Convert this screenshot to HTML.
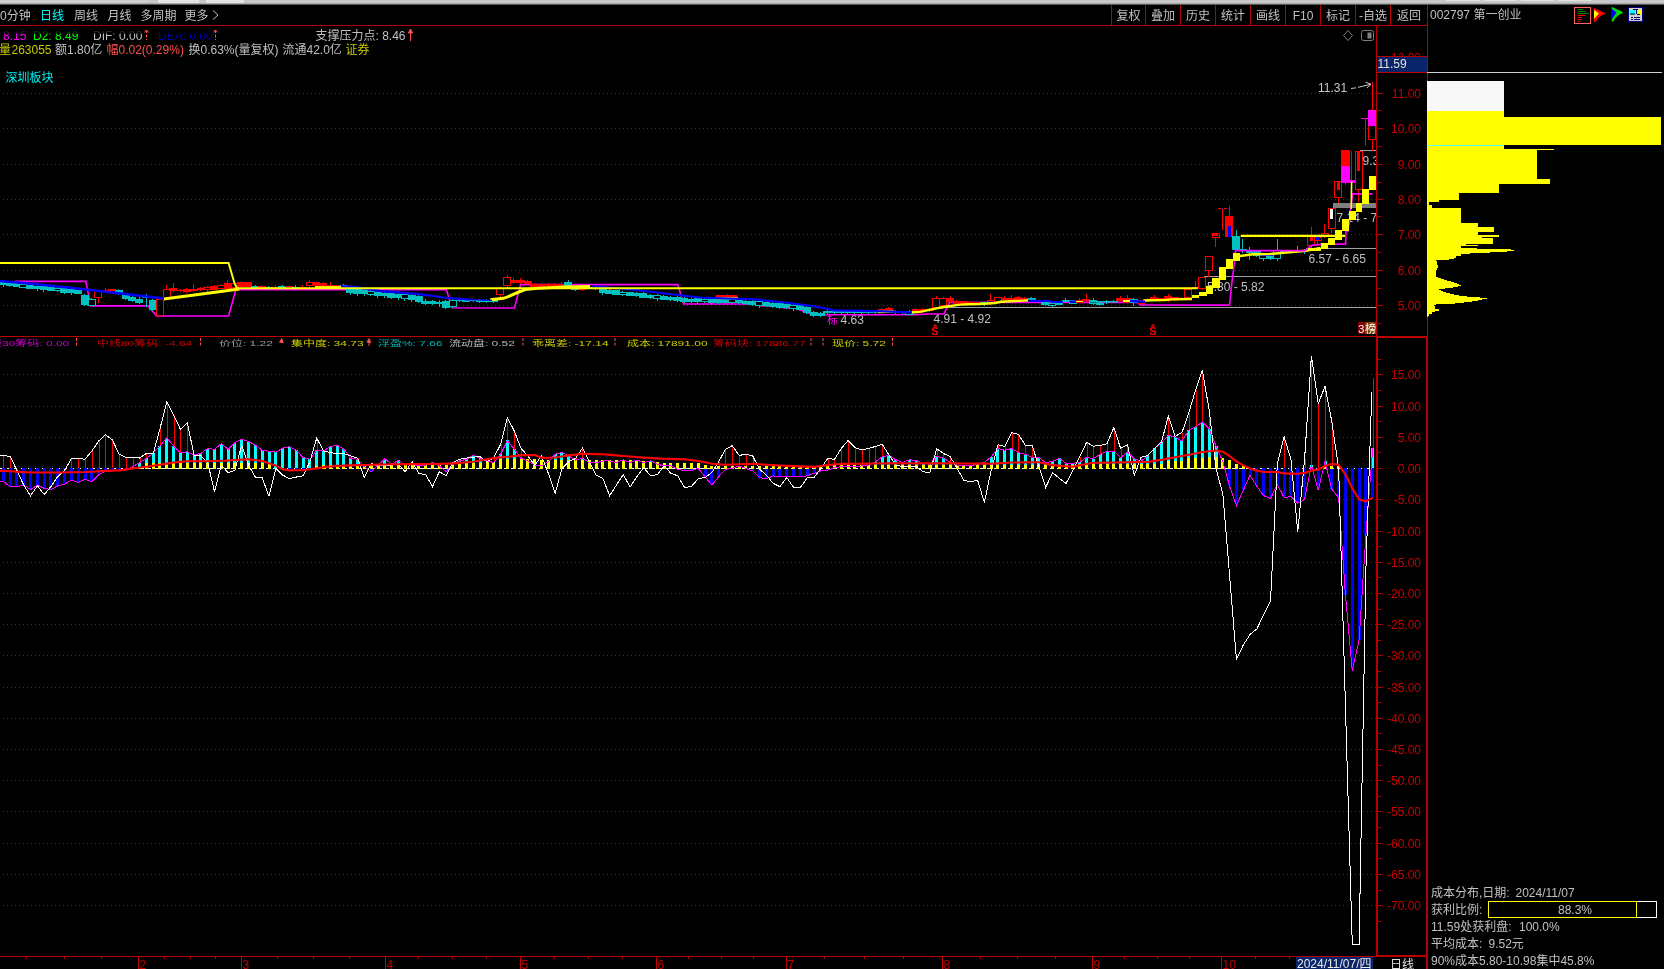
<!DOCTYPE html>
<html lang="zh"><head><meta charset="utf-8"><title>002797 第一创业</title>
<style>
html,body{margin:0;padding:0;background:#000;width:1664px;height:969px;overflow:hidden}
svg{display:block;position:absolute;left:0;top:0;will-change:transform}
text{font-family:"Liberation Sans","Noto Sans CJK SC",sans-serif;white-space:pre}
</style></head><body>
<svg width="1664" height="969" viewBox="0 0 1664 969">
<g shape-rendering="crispEdges">
<rect x="0" y="0" width="1664" height="969" fill="#000" />
<rect x="0" y="0" width="1664" height="4" fill="#c8c8c8" />
<rect x="0" y="3" width="1664" height="1" fill="#a8a8a8" />
<rect x="0" y="4" width="1664" height="1" fill="#585858" />
<rect x="158" y="0" width="41" height="3" fill="#e2e2e2" />
<rect x="206" y="0" width="38" height="3" fill="#e2e2e2" />
<rect x="1446" y="0" width="34" height="1" fill="#e2e2e2" />
<rect x="1484" y="0" width="33" height="1" fill="#e2e2e2" />
<rect x="1521" y="0" width="33" height="1" fill="#e2e2e2" />
<rect x="1558" y="0" width="33" height="1" fill="#e2e2e2" />
<rect x="0" y="0" width="147" height="3" fill="#d0d0d0" />
<rect x="0" y="25" width="1427" height="1" fill="#b80000" />
<rect x="1111" y="5" width="1" height="20" fill="#b80000" />
<rect x="1145" y="5" width="1" height="20" fill="#b80000" />
<rect x="1180" y="5" width="1" height="20" fill="#b80000" />
<rect x="1215" y="5" width="1" height="20" fill="#b80000" />
<rect x="1250" y="5" width="1" height="20" fill="#b80000" />
<rect x="1285" y="5" width="1" height="20" fill="#b80000" />
<rect x="1320" y="5" width="1" height="20" fill="#b80000" />
<rect x="1355" y="5" width="1" height="20" fill="#b80000" />
<rect x="1390" y="5" width="1" height="20" fill="#b80000" />
<rect x="1376" y="26" width="1" height="311" fill="#b80000" />
<rect x="1376" y="337" width="2" height="620" fill="#b80000" />
<rect x="1427" y="5" width="1" height="332" fill="#b80000" />
<rect x="1426" y="337" width="2" height="632" fill="#b80000" />
<rect x="0" y="336" width="1427" height="1" fill="#b80000" />
<rect x="1376" y="337" width="51" height="1" fill="#b80000" />
<rect x="1376" y="955" width="51" height="1" fill="#b80000" />
<rect x="0" y="956" width="1427" height="1" fill="#b80000" />
</g>
<g stroke="#b00000" stroke-width="1" stroke-dasharray="1 3" shape-rendering="crispEdges">
<line x1="3" y1="305.5" x2="1376" y2="305.5"/>
<line x1="3" y1="270.5" x2="1376" y2="270.5"/>
<line x1="3" y1="234.5" x2="1376" y2="234.5"/>
<line x1="3" y1="199.5" x2="1376" y2="199.5"/>
<line x1="3" y1="164.5" x2="1376" y2="164.5"/>
<line x1="3" y1="128.5" x2="1376" y2="128.5"/>
<line x1="3" y1="93.5" x2="1376" y2="93.5"/>
<line x1="3" y1="374.5" x2="1376" y2="374.5"/>
<line x1="3" y1="406.5" x2="1376" y2="406.5"/>
<line x1="3" y1="437.5" x2="1376" y2="437.5"/>
<line x1="3" y1="499.5" x2="1376" y2="499.5"/>
<line x1="3" y1="531.5" x2="1376" y2="531.5"/>
<line x1="3" y1="562.5" x2="1376" y2="562.5"/>
<line x1="3" y1="593.5" x2="1376" y2="593.5"/>
<line x1="3" y1="624.5" x2="1376" y2="624.5"/>
<line x1="3" y1="655.5" x2="1376" y2="655.5"/>
<line x1="3" y1="687.5" x2="1376" y2="687.5"/>
<line x1="3" y1="718.5" x2="1376" y2="718.5"/>
<line x1="3" y1="749.5" x2="1376" y2="749.5"/>
<line x1="3" y1="780.5" x2="1376" y2="780.5"/>
<line x1="3" y1="811.5" x2="1376" y2="811.5"/>
<line x1="3" y1="843.5" x2="1376" y2="843.5"/>
<line x1="3" y1="874.5" x2="1376" y2="874.5"/>
<line x1="3" y1="905.5" x2="1376" y2="905.5"/>
</g>
<g shape-rendering="crispEdges" fill="#b80000">
<rect x="1378" y="305" width="5" height="1" fill="#b80000" />
<rect x="1378" y="288" width="3" height="1" fill="#b80000" />
<rect x="1378" y="270" width="5" height="1" fill="#b80000" />
<rect x="1378" y="252" width="3" height="1" fill="#b80000" />
<rect x="1378" y="234" width="5" height="1" fill="#b80000" />
<rect x="1378" y="216" width="3" height="1" fill="#b80000" />
<rect x="1378" y="199" width="5" height="1" fill="#b80000" />
<rect x="1378" y="182" width="3" height="1" fill="#b80000" />
<rect x="1378" y="164" width="5" height="1" fill="#b80000" />
<rect x="1378" y="146" width="3" height="1" fill="#b80000" />
<rect x="1378" y="128" width="5" height="1" fill="#b80000" />
<rect x="1378" y="110" width="3" height="1" fill="#b80000" />
<rect x="1378" y="93" width="5" height="1" fill="#b80000" />
<rect x="1378" y="323" width="3" height="1" fill="#b80000" />
<rect x="1378" y="374" width="5" height="1" fill="#b80000" />
<rect x="1378" y="390" width="3" height="1" fill="#b80000" />
<rect x="1378" y="406" width="5" height="1" fill="#b80000" />
<rect x="1378" y="421" width="3" height="1" fill="#b80000" />
<rect x="1378" y="437" width="5" height="1" fill="#b80000" />
<rect x="1378" y="452" width="3" height="1" fill="#b80000" />
<rect x="1378" y="468" width="5" height="1" fill="#b80000" />
<rect x="1378" y="484" width="3" height="1" fill="#b80000" />
<rect x="1378" y="499" width="5" height="1" fill="#b80000" />
<rect x="1378" y="515" width="3" height="1" fill="#b80000" />
<rect x="1378" y="531" width="5" height="1" fill="#b80000" />
<rect x="1378" y="546" width="3" height="1" fill="#b80000" />
<rect x="1378" y="562" width="5" height="1" fill="#b80000" />
<rect x="1378" y="577" width="3" height="1" fill="#b80000" />
<rect x="1378" y="593" width="5" height="1" fill="#b80000" />
<rect x="1378" y="609" width="3" height="1" fill="#b80000" />
<rect x="1378" y="624" width="5" height="1" fill="#b80000" />
<rect x="1378" y="640" width="3" height="1" fill="#b80000" />
<rect x="1378" y="655" width="5" height="1" fill="#b80000" />
<rect x="1378" y="671" width="3" height="1" fill="#b80000" />
<rect x="1378" y="687" width="5" height="1" fill="#b80000" />
<rect x="1378" y="702" width="3" height="1" fill="#b80000" />
<rect x="1378" y="718" width="5" height="1" fill="#b80000" />
<rect x="1378" y="733" width="3" height="1" fill="#b80000" />
<rect x="1378" y="749" width="5" height="1" fill="#b80000" />
<rect x="1378" y="765" width="3" height="1" fill="#b80000" />
<rect x="1378" y="780" width="5" height="1" fill="#b80000" />
<rect x="1378" y="796" width="3" height="1" fill="#b80000" />
<rect x="1378" y="811" width="5" height="1" fill="#b80000" />
<rect x="1378" y="827" width="3" height="1" fill="#b80000" />
<rect x="1378" y="843" width="5" height="1" fill="#b80000" />
<rect x="1378" y="858" width="3" height="1" fill="#b80000" />
<rect x="1378" y="874" width="5" height="1" fill="#b80000" />
<rect x="1378" y="890" width="3" height="1" fill="#b80000" />
<rect x="1378" y="905" width="5" height="1" fill="#b80000" />
<rect x="1378" y="921" width="3" height="1" fill="#b80000" />
<rect x="1378" y="359" width="3" height="1" fill="#b80000" />
</g>
<g font-family='"Liberation Sans","Noto Sans CJK SC",sans-serif' font-size="12" fill="#c80000" text-anchor="end">
<text x="1421" y="62.4" fill="#c80000" font-size="12" text-anchor="end" >12.00</text>
<text x="1421" y="309.6" fill="#c80000" font-size="12" text-anchor="end" >5.00</text>
<text x="1421" y="274.6" fill="#c80000" font-size="12" text-anchor="end" >6.00</text>
<text x="1421" y="238.6" fill="#c80000" font-size="12" text-anchor="end" >7.00</text>
<text x="1421" y="203.6" fill="#c80000" font-size="12" text-anchor="end" >8.00</text>
<text x="1421" y="168.6" fill="#c80000" font-size="12" text-anchor="end" >9.00</text>
<text x="1421" y="132.6" fill="#c80000" font-size="12" text-anchor="end" >10.00</text>
<text x="1421" y="97.6" fill="#c80000" font-size="12" text-anchor="end" >11.00</text>
<text x="1421" y="378.6" fill="#c80000" font-size="12" text-anchor="end" >15.00</text>
<text x="1421" y="410.6" fill="#c80000" font-size="12" text-anchor="end" >10.00</text>
<text x="1421" y="441.6" fill="#c80000" font-size="12" text-anchor="end" >5.00</text>
<text x="1421" y="472.6" fill="#c80000" font-size="12" text-anchor="end" >0.00</text>
<text x="1421" y="503.6" fill="#c80000" font-size="12" text-anchor="end" >-5.00</text>
<text x="1421" y="535.6" fill="#c80000" font-size="12" text-anchor="end" >-10.00</text>
<text x="1421" y="566.6" fill="#c80000" font-size="12" text-anchor="end" >-15.00</text>
<text x="1421" y="597.6" fill="#c80000" font-size="12" text-anchor="end" >-20.00</text>
<text x="1421" y="628.6" fill="#c80000" font-size="12" text-anchor="end" >-25.00</text>
<text x="1421" y="659.6" fill="#c80000" font-size="12" text-anchor="end" >-30.00</text>
<text x="1421" y="691.6" fill="#c80000" font-size="12" text-anchor="end" >-35.00</text>
<text x="1421" y="722.6" fill="#c80000" font-size="12" text-anchor="end" >-40.00</text>
<text x="1421" y="753.6" fill="#c80000" font-size="12" text-anchor="end" >-45.00</text>
<text x="1421" y="784.6" fill="#c80000" font-size="12" text-anchor="end" >-50.00</text>
<text x="1421" y="815.6" fill="#c80000" font-size="12" text-anchor="end" >-55.00</text>
<text x="1421" y="847.6" fill="#c80000" font-size="12" text-anchor="end" >-60.00</text>
<text x="1421" y="878.6" fill="#c80000" font-size="12" text-anchor="end" >-65.00</text>
<text x="1421" y="909.6" fill="#c80000" font-size="12" text-anchor="end" >-70.00</text>
</g>
<defs><clipPath id="cu"><rect x="0" y="26" width="1376" height="310"/></clipPath><clipPath id="cl"><rect x="0" y="337" width="1376" height="619"/></clipPath></defs>
<g clip-path="url(#cu)">
<g shape-rendering="crispEdges">
<rect x="945.7" y="307" width="431" height="1" fill="#a0a0a0" />
<rect x="1204.3" y="276" width="172" height="1" fill="#a0a0a0" />
<rect x="1306" y="248" width="70" height="1" fill="#a0a0a0" />
<rect x="1360" y="150" width="16" height="1" fill="#a0a0a0" />
<rect x="1333" y="203.2" width="43.5" height="4.7" fill="#808080" />
</g>
<g font-family='"Liberation Sans","Noto Sans CJK SC",sans-serif' font-size="12" fill="#c8c8c8">
<text x="1207" y="291" fill="#c0c0c0" font-size="12" text-anchor="start" >5.80 - 5.82</text>
<text x="1308.5" y="263" fill="#c0c0c0" font-size="12" text-anchor="start" >6.57 - 6.65</text>
<text x="1336.5" y="222" fill="#c0c0c0" font-size="12" text-anchor="start" >7.14 - 7.24</text>
<text x="1362.5" y="164.6" fill="#c0c0c0" font-size="12" text-anchor="start" >9.30</text>
<text x="840.5" y="323.5" fill="#c0c0c0" font-size="12" text-anchor="start" >4.63</text>
<text x="933.5" y="322.5" fill="#c0c0c0" font-size="12" text-anchor="start" >4.91 - 4.92</text>
</g>
<polyline points="14.4,281.4 85.8,281.4 90.9,305.9 148,305.9 156.5,316 228.6,316 235.8,289.8 446.4,289.8 452,307.8 514.5,308 520.6,284.6 677.8,284.6 683.6,304 755,304 762,306 777,306 784,308 795,308 812.6,314.8 913.6,314.8 929,314 943.8,314 949.6,302.5 1136.4,302.2 1140.7,305 1229.6,305.1" fill="none" stroke="#ff00ff" stroke-width="1.6" stroke-linejoin="miter"/>
<g shape-rendering="crispEdges">
<line x1="3" y1="280.88" x2="3" y2="286.87" stroke="#00c0c0" stroke-width="1" />
<rect x="-1" y="281.61" width="8" height="3.78" fill="#00c0c0" />
<line x1="9.81" y1="281.3" x2="9.81" y2="286.99" stroke="#00c0c0" stroke-width="1" />
<rect x="5.81" y="282.61" width="8" height="3.33" fill="#00c0c0" />
<line x1="16.63" y1="282.13" x2="16.63" y2="287.25" stroke="#00c0c0" stroke-width="1" />
<rect x="12.63" y="283.39" width="8" height="3.3" fill="#00c0c0" />
<line x1="23.44" y1="283.22" x2="23.44" y2="283.83" stroke="#00c0c0" stroke-width="1" />
<line x1="23.44" y1="287.81" x2="23.44" y2="288.44" stroke="#00c0c0" stroke-width="1" />
<rect x="19.94" y="284.33" width="7" height="2.98" fill="#000" stroke="#00c0c0" stroke-width="1"/>
<line x1="30.25" y1="282.87" x2="30.25" y2="289.26" stroke="#00c0c0" stroke-width="1" />
<rect x="26.25" y="284.61" width="8" height="3.96" fill="#00c0c0" />
<line x1="37.06" y1="284.12" x2="37.06" y2="291.09" stroke="#00c0c0" stroke-width="1" />
<rect x="33.06" y="285.56" width="8" height="3.6" fill="#00c0c0" />
<line x1="43.88" y1="284.92" x2="43.88" y2="292.22" stroke="#00c0c0" stroke-width="1" />
<rect x="39.88" y="286.02" width="8" height="4.24" fill="#00c0c0" />
<line x1="50.69" y1="285.48" x2="50.69" y2="291.49" stroke="#00c0c0" stroke-width="1" />
<rect x="46.69" y="287.27" width="8" height="3.28" fill="#00c0c0" />
<line x1="57.5" y1="287.28" x2="57.5" y2="287.95" stroke="#00c0c0" stroke-width="1" />
<line x1="57.5" y1="291.41" x2="57.5" y2="292.37" stroke="#00c0c0" stroke-width="1" />
<rect x="54" y="288.45" width="7" height="2.46" fill="#000" stroke="#00c0c0" stroke-width="1"/>
<line x1="64.32" y1="287.35" x2="64.32" y2="294.16" stroke="#00c0c0" stroke-width="1" />
<rect x="60.32" y="288.12" width="8" height="4.67" fill="#00c0c0" />
<line x1="71.13" y1="287.99" x2="71.13" y2="294.72" stroke="#00c0c0" stroke-width="1" />
<rect x="67.13" y="289.05" width="8" height="4.35" fill="#00c0c0" />
<line x1="77.94" y1="289.75" x2="77.94" y2="294.47" stroke="#00c0c0" stroke-width="1" />
<rect x="73.94" y="290.34" width="8" height="3.31" fill="#00c0c0" />
<line x1="84.76" y1="293.5" x2="84.76" y2="305.5" stroke="#00c0c0" stroke-width="1" />
<rect x="80.76" y="294.7" width="8" height="10.1" fill="#00c0c0" />
<line x1="91.57" y1="297.5" x2="91.57" y2="299.4" stroke="#00c0c0" stroke-width="1" />
<line x1="91.57" y1="305.5" x2="91.57" y2="306" stroke="#00c0c0" stroke-width="1" />
<rect x="88.07" y="299.9" width="7" height="5.1" fill="#000" stroke="#00c0c0" stroke-width="1"/>
<line x1="98.38" y1="290.5" x2="98.38" y2="291.3" stroke="#ff0000" stroke-width="1" />
<line x1="98.38" y1="298.3" x2="98.38" y2="302.6" stroke="#ff0000" stroke-width="1" />
<rect x="94.88" y="291.8" width="7" height="6" fill="none" stroke="#ff0000" stroke-width="1"/>
<line x1="105.19" y1="288" x2="105.19" y2="289.5" stroke="#ff0000" stroke-width="1" />
<line x1="105.19" y1="291" x2="105.19" y2="292" stroke="#ff0000" stroke-width="1" />
<rect x="101.69" y="290" width="7" height="0.6" fill="none" stroke="#ff0000" stroke-width="1"/>
<line x1="112.01" y1="288.5" x2="112.01" y2="291.5" stroke="#ff0000" stroke-width="1" />
<rect x="108.01" y="289.3" width="8" height="1.7" fill="#ff0000" />
<line x1="118.82" y1="289" x2="118.82" y2="295" stroke="#00c0c0" stroke-width="1" />
<rect x="114.82" y="290" width="8" height="4.2" fill="#00c0c0" />
<line x1="125.63" y1="292.88" x2="125.63" y2="299.89" stroke="#00c0c0" stroke-width="1" />
<rect x="121.63" y="294.24" width="8" height="4.52" fill="#00c0c0" />
<line x1="132.45" y1="295.15" x2="132.45" y2="302.04" stroke="#00c0c0" stroke-width="1" />
<rect x="128.45" y="296.56" width="8" height="4.38" fill="#00c0c0" />
<line x1="139.26" y1="296.76" x2="139.26" y2="304.33" stroke="#00c0c0" stroke-width="1" />
<rect x="135.26" y="298.65" width="8" height="4.69" fill="#00c0c0" />
<line x1="146.07" y1="294" x2="146.07" y2="296" stroke="#00c0c0" stroke-width="1" />
<line x1="146.07" y1="298.3" x2="146.07" y2="307" stroke="#00c0c0" stroke-width="1" />
<rect x="142.57" y="296.5" width="7" height="1.3" fill="#000" stroke="#00c0c0" stroke-width="1"/>
<line x1="152.89" y1="299" x2="152.89" y2="310.5" stroke="#00c0c0" stroke-width="1" />
<rect x="148.89" y="300" width="8" height="9.8" fill="#00c0c0" />
<line x1="159.7" y1="298" x2="159.7" y2="299" stroke="#ff0000" stroke-width="1" />
<line x1="159.7" y1="315.6" x2="159.7" y2="316.5" stroke="#ff0000" stroke-width="1" />
<rect x="156.2" y="299.5" width="7" height="15.6" fill="none" stroke="#ff0000" stroke-width="1"/>
<line x1="166.51" y1="285" x2="166.51" y2="289.3" stroke="#ff0000" stroke-width="1" />
<line x1="166.51" y1="299" x2="166.51" y2="299.5" stroke="#ff0000" stroke-width="1" />
<rect x="163.01" y="289.8" width="7" height="8.7" fill="none" stroke="#ff0000" stroke-width="1"/>
<line x1="173.32" y1="283" x2="173.32" y2="291.5" stroke="#ff0000" stroke-width="1" />
<rect x="169.32" y="288.3" width="8" height="2.7" fill="#ff0000" />
<line x1="180.14" y1="289" x2="180.14" y2="289.6" stroke="#ff0000" stroke-width="1" />
<line x1="180.14" y1="291.3" x2="180.14" y2="292" stroke="#ff0000" stroke-width="1" />
<rect x="176.64" y="290.1" width="7" height="0.7" fill="none" stroke="#ff0000" stroke-width="1"/>
<line x1="186.95" y1="287.5" x2="186.95" y2="293" stroke="#ff0000" stroke-width="1" />
<rect x="182.95" y="289.3" width="8" height="2.9" fill="#ff0000" />
<line x1="193.76" y1="284" x2="193.76" y2="288.5" stroke="#ff0000" stroke-width="1" />
<line x1="193.76" y1="290.8" x2="193.76" y2="291.5" stroke="#ff0000" stroke-width="1" />
<rect x="190.26" y="289" width="7" height="1.3" fill="none" stroke="#ff0000" stroke-width="1"/>
<line x1="200.58" y1="287" x2="200.58" y2="287.9" stroke="#ff0000" stroke-width="1" />
<line x1="200.58" y1="290.3" x2="200.58" y2="291" stroke="#ff0000" stroke-width="1" />
<rect x="197.08" y="288.4" width="7" height="1.4" fill="none" stroke="#ff0000" stroke-width="1"/>
<line x1="207.39" y1="286" x2="207.39" y2="287.3" stroke="#ff0000" stroke-width="1" />
<line x1="207.39" y1="289.8" x2="207.39" y2="291.5" stroke="#ff0000" stroke-width="1" />
<rect x="203.89" y="287.8" width="7" height="1.5" fill="none" stroke="#ff0000" stroke-width="1"/>
<line x1="214.2" y1="285" x2="214.2" y2="290" stroke="#ff0000" stroke-width="1" />
<rect x="210.2" y="286" width="8" height="3.6" fill="#ff0000" />
<line x1="221.02" y1="284" x2="221.02" y2="284.6" stroke="#ff0000" stroke-width="1" />
<line x1="221.02" y1="288.9" x2="221.02" y2="289.5" stroke="#ff0000" stroke-width="1" />
<rect x="217.52" y="285.1" width="7" height="3.3" fill="none" stroke="#ff0000" stroke-width="1"/>
<line x1="227.83" y1="279.5" x2="227.83" y2="289.5" stroke="#ff0000" stroke-width="1" />
<rect x="223.83" y="283.1" width="8" height="5.8" fill="#ff0000" />
<line x1="234.64" y1="282" x2="234.64" y2="283.1" stroke="#ff0000" stroke-width="1" />
<line x1="234.64" y1="288.2" x2="234.64" y2="289" stroke="#ff0000" stroke-width="1" />
<rect x="231.14" y="283.6" width="7" height="4.1" fill="none" stroke="#ff0000" stroke-width="1"/>
<line x1="241.45" y1="280.5" x2="241.45" y2="287" stroke="#ff0000" stroke-width="1" />
<rect x="237.45" y="282" width="8" height="4.6" fill="#ff0000" />
<line x1="248.27" y1="281.5" x2="248.27" y2="287" stroke="#ff0000" stroke-width="1" />
<rect x="244.27" y="282.4" width="8" height="4.2" fill="#ff0000" />
<line x1="255.08" y1="285.02" x2="255.08" y2="286.31" stroke="#00c0c0" stroke-width="1" />
<line x1="255.08" y1="288.09" x2="255.08" y2="289.9" stroke="#00c0c0" stroke-width="1" />
<rect x="251.58" y="286.81" width="7" height="0.77" fill="#000" stroke="#00c0c0" stroke-width="1"/>
<line x1="261.89" y1="285.36" x2="261.89" y2="286.29" stroke="#ff0000" stroke-width="1" />
<line x1="261.89" y1="288.22" x2="261.89" y2="290.19" stroke="#ff0000" stroke-width="1" />
<rect x="258.39" y="286.79" width="7" height="0.93" fill="none" stroke="#ff0000" stroke-width="1"/>
<line x1="268.71" y1="285.53" x2="268.71" y2="289.61" stroke="#00c0c0" stroke-width="1" />
<rect x="264.71" y="286.66" width="8" height="1.32" fill="#00c0c0" />
<line x1="275.52" y1="285.46" x2="275.52" y2="286.7" stroke="#ff0000" stroke-width="1" />
<line x1="275.52" y1="288.05" x2="275.52" y2="288.61" stroke="#ff0000" stroke-width="1" />
<rect x="272.02" y="287.2" width="7" height="0.6" fill="none" stroke="#ff0000" stroke-width="1"/>
<line x1="282.33" y1="284.85" x2="282.33" y2="286.49" stroke="#00c0c0" stroke-width="1" />
<line x1="282.33" y1="288.36" x2="282.33" y2="289.72" stroke="#00c0c0" stroke-width="1" />
<rect x="278.83" y="286.99" width="7" height="0.87" fill="#000" stroke="#00c0c0" stroke-width="1"/>
<line x1="289.15" y1="285.48" x2="289.15" y2="286.45" stroke="#ff0000" stroke-width="1" />
<line x1="289.15" y1="288.52" x2="289.15" y2="290.07" stroke="#ff0000" stroke-width="1" />
<rect x="285.65" y="286.95" width="7" height="1.08" fill="none" stroke="#ff0000" stroke-width="1"/>
<line x1="295.96" y1="285.28" x2="295.96" y2="289.62" stroke="#00c0c0" stroke-width="1" />
<rect x="291.96" y="286.65" width="8" height="1.79" fill="#00c0c0" />
<line x1="302.77" y1="284.66" x2="302.77" y2="286.58" stroke="#ff0000" stroke-width="1" />
<line x1="302.77" y1="288.62" x2="302.77" y2="289.83" stroke="#ff0000" stroke-width="1" />
<rect x="299.27" y="287.08" width="7" height="1.04" fill="none" stroke="#ff0000" stroke-width="1"/>
<line x1="309.58" y1="280" x2="309.58" y2="282" stroke="#ff0000" stroke-width="1" />
<line x1="309.58" y1="286" x2="309.58" y2="288" stroke="#ff0000" stroke-width="1" />
<rect x="306.08" y="282.5" width="7" height="3" fill="none" stroke="#ff0000" stroke-width="1"/>
<line x1="316.4" y1="281.5" x2="316.4" y2="286" stroke="#ff0000" stroke-width="1" />
<rect x="312.4" y="282.3" width="8" height="3.2" fill="#ff0000" />
<line x1="323.21" y1="282" x2="323.21" y2="286" stroke="#ff0000" stroke-width="1" />
<rect x="319.21" y="282.8" width="8" height="2.7" fill="#ff0000" />
<line x1="330.02" y1="282" x2="330.02" y2="287" stroke="#ff0000" stroke-width="1" />
<rect x="326.02" y="284.5" width="8" height="2" fill="#ff0000" />
<line x1="336.84" y1="285" x2="336.84" y2="285" stroke="#ff0000" stroke-width="1" />
<line x1="336.84" y1="287" x2="336.84" y2="287" stroke="#ff0000" stroke-width="1" />
<rect x="333.34" y="285.5" width="7" height="1" fill="none" stroke="#ff0000" stroke-width="1"/>
<line x1="343.65" y1="283.5" x2="343.65" y2="287" stroke="#00c0c0" stroke-width="1" />
<rect x="339.65" y="284.5" width="8" height="2.1" fill="#00c0c0" />
<line x1="350.46" y1="287.96" x2="350.46" y2="295.32" stroke="#00c0c0" stroke-width="1" />
<rect x="346.46" y="288.59" width="8" height="4.83" fill="#00c0c0" />
<line x1="357.28" y1="286.84" x2="357.28" y2="296.26" stroke="#00c0c0" stroke-width="1" />
<rect x="353.28" y="289.33" width="8" height="4.79" fill="#00c0c0" />
<line x1="364.09" y1="289.14" x2="364.09" y2="296.32" stroke="#00c0c0" stroke-width="1" />
<rect x="360.09" y="290.41" width="8" height="4.07" fill="#00c0c0" />
<line x1="370.9" y1="289.97" x2="370.9" y2="291.39" stroke="#00c0c0" stroke-width="1" />
<line x1="370.9" y1="294.94" x2="370.9" y2="295.78" stroke="#00c0c0" stroke-width="1" />
<rect x="367.4" y="291.89" width="7" height="2.55" fill="#000" stroke="#00c0c0" stroke-width="1"/>
<line x1="377.71" y1="291.4" x2="377.71" y2="297.79" stroke="#00c0c0" stroke-width="1" />
<rect x="373.71" y="292.02" width="8" height="3.73" fill="#00c0c0" />
<line x1="384.53" y1="291.74" x2="384.53" y2="297.77" stroke="#00c0c0" stroke-width="1" />
<rect x="380.53" y="292.73" width="8" height="3.76" fill="#00c0c0" />
<line x1="391.34" y1="292.05" x2="391.34" y2="299.35" stroke="#00c0c0" stroke-width="1" />
<rect x="387.34" y="292.71" width="8" height="5.24" fill="#00c0c0" />
<line x1="398.15" y1="291.49" x2="398.15" y2="300.49" stroke="#00c0c0" stroke-width="1" />
<rect x="394.15" y="293.76" width="8" height="4.6" fill="#00c0c0" />
<line x1="404.97" y1="293.11" x2="404.97" y2="294.16" stroke="#00c0c0" stroke-width="1" />
<line x1="404.97" y1="299.39" x2="404.97" y2="300.72" stroke="#00c0c0" stroke-width="1" />
<rect x="401.47" y="294.66" width="7" height="4.23" fill="#000" stroke="#00c0c0" stroke-width="1"/>
<line x1="411.78" y1="293.12" x2="411.78" y2="302.02" stroke="#00c0c0" stroke-width="1" />
<rect x="407.78" y="295.39" width="8" height="4.22" fill="#00c0c0" />
<line x1="418.59" y1="295" x2="418.59" y2="302.5" stroke="#00c0c0" stroke-width="1" />
<rect x="414.59" y="296" width="8" height="5.8" fill="#00c0c0" />
<line x1="425.41" y1="298.5" x2="425.41" y2="304.5" stroke="#00c0c0" stroke-width="1" />
<rect x="421.41" y="300.5" width="8" height="3.5" fill="#00c0c0" />
<line x1="432.22" y1="300" x2="432.22" y2="305" stroke="#00c0c0" stroke-width="1" />
<rect x="428.22" y="300.8" width="8" height="3.4" fill="#00c0c0" />
<line x1="439.03" y1="299.5" x2="439.03" y2="301.5" stroke="#00c0c0" stroke-width="1" />
<line x1="439.03" y1="303.5" x2="439.03" y2="306.5" stroke="#00c0c0" stroke-width="1" />
<rect x="435.53" y="302" width="7" height="1" fill="#000" stroke="#00c0c0" stroke-width="1"/>
<line x1="445.84" y1="300" x2="445.84" y2="308.5" stroke="#00c0c0" stroke-width="1" />
<rect x="441.84" y="301" width="8" height="6.5" fill="#00c0c0" />
<line x1="452.66" y1="298" x2="452.66" y2="300.3" stroke="#00c0c0" stroke-width="1" />
<line x1="452.66" y1="306.8" x2="452.66" y2="308" stroke="#00c0c0" stroke-width="1" />
<rect x="449.16" y="300.8" width="7" height="5.5" fill="#000" stroke="#00c0c0" stroke-width="1"/>
<line x1="459.47" y1="299.43" x2="459.47" y2="301.84" stroke="#00c0c0" stroke-width="1" />
<rect x="455.47" y="299.94" width="8" height="1.32" fill="#00c0c0" />
<line x1="466.28" y1="299.08" x2="466.28" y2="299.97" stroke="#00c0c0" stroke-width="1" />
<line x1="466.28" y1="301.35" x2="466.28" y2="302.36" stroke="#00c0c0" stroke-width="1" />
<rect x="462.78" y="300.47" width="7" height="0.6" fill="#000" stroke="#00c0c0" stroke-width="1"/>
<line x1="473.1" y1="299.71" x2="473.1" y2="302.23" stroke="#00c0c0" stroke-width="1" />
<rect x="469.1" y="300.01" width="8" height="1.41" fill="#00c0c0" />
<line x1="479.91" y1="299.05" x2="479.91" y2="300.03" stroke="#00c0c0" stroke-width="1" />
<line x1="479.91" y1="301.53" x2="479.91" y2="302.97" stroke="#00c0c0" stroke-width="1" />
<rect x="476.41" y="300.53" width="7" height="0.6" fill="#000" stroke="#00c0c0" stroke-width="1"/>
<line x1="486.72" y1="299.05" x2="486.72" y2="302.76" stroke="#00c0c0" stroke-width="1" />
<rect x="482.72" y="299.96" width="8" height="1.75" fill="#00c0c0" />
<line x1="493.54" y1="299.66" x2="493.54" y2="300.03" stroke="#00c0c0" stroke-width="1" />
<line x1="493.54" y1="301.77" x2="493.54" y2="303.15" stroke="#00c0c0" stroke-width="1" />
<rect x="490.04" y="300.53" width="7" height="0.74" fill="#000" stroke="#00c0c0" stroke-width="1"/>
<line x1="500.35" y1="286.5" x2="500.35" y2="288.2" stroke="#ff0000" stroke-width="1" />
<line x1="500.35" y1="294.7" x2="500.35" y2="298" stroke="#ff0000" stroke-width="1" />
<rect x="496.85" y="288.7" width="7" height="5.5" fill="none" stroke="#ff0000" stroke-width="1"/>
<line x1="507.16" y1="275.2" x2="507.16" y2="277.4" stroke="#ff0000" stroke-width="1" />
<line x1="507.16" y1="286" x2="507.16" y2="288.5" stroke="#ff0000" stroke-width="1" />
<rect x="503.66" y="277.9" width="7" height="7.6" fill="none" stroke="#ff0000" stroke-width="1"/>
<line x1="513.97" y1="277.5" x2="513.97" y2="284" stroke="#ff0000" stroke-width="1" />
<rect x="509.97" y="279.5" width="8" height="3.5" fill="#ff0000" />
<line x1="520.79" y1="278" x2="520.79" y2="284" stroke="#ff0000" stroke-width="1" />
<rect x="516.79" y="279.8" width="8" height="3.2" fill="#ff0000" />
<line x1="527.6" y1="279.5" x2="527.6" y2="284" stroke="#ff0000" stroke-width="1" />
<rect x="523.6" y="281" width="8" height="2.5" fill="#ff0000" />
<line x1="534.41" y1="283" x2="534.41" y2="287.5" stroke="#ff0000" stroke-width="1" />
<rect x="530.41" y="283.8" width="8" height="3.2" fill="#ff0000" />
<line x1="541.23" y1="283" x2="541.23" y2="287.5" stroke="#ff0000" stroke-width="1" />
<rect x="537.23" y="283.8" width="8" height="3.2" fill="#ff0000" />
<line x1="548.04" y1="283" x2="548.04" y2="284" stroke="#ff0000" stroke-width="1" />
<line x1="548.04" y1="285.6" x2="548.04" y2="286.5" stroke="#ff0000" stroke-width="1" />
<rect x="544.54" y="284.5" width="7" height="0.6" fill="none" stroke="#ff0000" stroke-width="1"/>
<line x1="554.85" y1="283" x2="554.85" y2="284" stroke="#ff0000" stroke-width="1" />
<line x1="554.85" y1="285.6" x2="554.85" y2="286.5" stroke="#ff0000" stroke-width="1" />
<rect x="551.35" y="284.5" width="7" height="0.6" fill="none" stroke="#ff0000" stroke-width="1"/>
<line x1="561.67" y1="282" x2="561.67" y2="283.8" stroke="#ff0000" stroke-width="1" />
<line x1="561.67" y1="285.6" x2="561.67" y2="287" stroke="#ff0000" stroke-width="1" />
<rect x="558.17" y="284.3" width="7" height="0.8" fill="none" stroke="#ff0000" stroke-width="1"/>
<line x1="568.48" y1="280" x2="568.48" y2="286.5" stroke="#00c0c0" stroke-width="1" />
<rect x="564.48" y="282" width="8" height="4" fill="#00c0c0" />
<line x1="575.29" y1="286.5" x2="575.29" y2="290.5" stroke="#00c0c0" stroke-width="1" />
<rect x="571.29" y="287.3" width="8" height="2.3" fill="#00c0c0" />
<line x1="582.11" y1="285.5" x2="582.11" y2="286" stroke="#ff0000" stroke-width="1" />
<line x1="582.11" y1="289.6" x2="582.11" y2="290.5" stroke="#ff0000" stroke-width="1" />
<rect x="578.61" y="286.5" width="7" height="2.6" fill="none" stroke="#ff0000" stroke-width="1"/>
<line x1="588.92" y1="287" x2="588.92" y2="288.5" stroke="#00c0c0" stroke-width="1" />
<rect x="584.92" y="287" width="8" height="1.5" fill="#00c0c0" />
<line x1="595.73" y1="284" x2="595.73" y2="287.5" stroke="#00c0c0" stroke-width="1" />
<line x1="595.73" y1="289" x2="595.73" y2="289.5" stroke="#00c0c0" stroke-width="1" />
<rect x="592.23" y="288" width="7" height="0.6" fill="#000" stroke="#00c0c0" stroke-width="1"/>
<line x1="602.54" y1="287" x2="602.54" y2="294.88" stroke="#00c0c0" stroke-width="1" />
<rect x="598.54" y="288.8" width="8" height="4.4" fill="#00c0c0" />
<line x1="609.36" y1="288.86" x2="609.36" y2="294.17" stroke="#00c0c0" stroke-width="1" />
<rect x="605.36" y="289.9" width="8" height="3.71" fill="#00c0c0" />
<line x1="616.17" y1="289.93" x2="616.17" y2="295.08" stroke="#00c0c0" stroke-width="1" />
<rect x="612.17" y="290.43" width="8" height="4.14" fill="#00c0c0" />
<line x1="622.98" y1="290.9" x2="622.98" y2="291.56" stroke="#00c0c0" stroke-width="1" />
<line x1="622.98" y1="294.94" x2="622.98" y2="295.88" stroke="#00c0c0" stroke-width="1" />
<rect x="619.48" y="292.06" width="7" height="2.38" fill="#000" stroke="#00c0c0" stroke-width="1"/>
<line x1="629.8" y1="292.05" x2="629.8" y2="296.19" stroke="#00c0c0" stroke-width="1" />
<rect x="625.8" y="292.45" width="8" height="3.09" fill="#00c0c0" />
<line x1="636.61" y1="292.18" x2="636.61" y2="296.78" stroke="#00c0c0" stroke-width="1" />
<rect x="632.61" y="293.16" width="8" height="3.18" fill="#00c0c0" />
<line x1="643.42" y1="291.83" x2="643.42" y2="298.42" stroke="#00c0c0" stroke-width="1" />
<rect x="639.42" y="293.21" width="8" height="4.57" fill="#00c0c0" />
<line x1="650.24" y1="293.57" x2="650.24" y2="298.96" stroke="#00c0c0" stroke-width="1" />
<rect x="646.24" y="294.52" width="8" height="3.45" fill="#00c0c0" />
<line x1="657.05" y1="293.63" x2="657.05" y2="295.39" stroke="#00c0c0" stroke-width="1" />
<line x1="657.05" y1="298.61" x2="657.05" y2="300.6" stroke="#00c0c0" stroke-width="1" />
<rect x="653.55" y="295.89" width="7" height="2.22" fill="#000" stroke="#00c0c0" stroke-width="1"/>
<line x1="663.86" y1="294.66" x2="663.86" y2="300.21" stroke="#00c0c0" stroke-width="1" />
<rect x="659.86" y="295.83" width="8" height="3.84" fill="#00c0c0" />
<line x1="670.67" y1="295.96" x2="670.67" y2="300.92" stroke="#00c0c0" stroke-width="1" />
<rect x="666.67" y="296.91" width="8" height="3.18" fill="#00c0c0" />
<line x1="677.49" y1="296.35" x2="677.49" y2="301.93" stroke="#00c0c0" stroke-width="1" />
<rect x="673.49" y="297" width="8" height="4.49" fill="#00c0c0" />
<line x1="684.3" y1="296.4" x2="684.3" y2="302.99" stroke="#00c0c0" stroke-width="1" />
<rect x="680.3" y="297.64" width="8" height="4.71" fill="#00c0c0" />
<line x1="691.11" y1="298.2" x2="691.11" y2="303.01" stroke="#00c0c0" stroke-width="1" />
<rect x="687.11" y="298.53" width="8" height="3.54" fill="#00c0c0" />
<line x1="697.93" y1="297.12" x2="697.93" y2="303.57" stroke="#00c0c0" stroke-width="1" />
<rect x="693.93" y="298.46" width="8" height="3.98" fill="#00c0c0" />
<line x1="704.74" y1="298.23" x2="704.74" y2="298.97" stroke="#00c0c0" stroke-width="1" />
<line x1="704.74" y1="302.23" x2="704.74" y2="302.73" stroke="#00c0c0" stroke-width="1" />
<rect x="701.24" y="299.47" width="7" height="2.26" fill="#000" stroke="#00c0c0" stroke-width="1"/>
<line x1="711.55" y1="297.92" x2="711.55" y2="303.87" stroke="#00c0c0" stroke-width="1" />
<rect x="707.55" y="298.86" width="8" height="3.77" fill="#00c0c0" />
<line x1="718.37" y1="298.67" x2="718.37" y2="303.84" stroke="#00c0c0" stroke-width="1" />
<rect x="714.37" y="299.24" width="8" height="3.33" fill="#00c0c0" />
<line x1="725.18" y1="297.73" x2="725.18" y2="304.31" stroke="#00c0c0" stroke-width="1" />
<rect x="721.18" y="299.06" width="8" height="3.98" fill="#00c0c0" />
<line x1="731.99" y1="298.1" x2="731.99" y2="299.29" stroke="#00c0c0" stroke-width="1" />
<line x1="731.99" y1="303.11" x2="731.99" y2="303.68" stroke="#00c0c0" stroke-width="1" />
<rect x="728.49" y="299.79" width="7" height="2.82" fill="#000" stroke="#00c0c0" stroke-width="1"/>
<line x1="738.8" y1="298.57" x2="738.8" y2="303.91" stroke="#00c0c0" stroke-width="1" />
<rect x="734.8" y="299.53" width="8" height="3.93" fill="#00c0c0" />
<line x1="745.62" y1="299.79" x2="745.62" y2="304.51" stroke="#00c0c0" stroke-width="1" />
<rect x="741.62" y="300.64" width="8" height="3.05" fill="#00c0c0" />
<line x1="752.43" y1="298.78" x2="752.43" y2="306.07" stroke="#00c0c0" stroke-width="1" />
<rect x="748.43" y="300.71" width="8" height="4.25" fill="#00c0c0" />
<line x1="759.24" y1="299.18" x2="759.24" y2="301.16" stroke="#00c0c0" stroke-width="1" />
<line x1="759.24" y1="305.84" x2="759.24" y2="307.77" stroke="#00c0c0" stroke-width="1" />
<rect x="755.74" y="301.66" width="7" height="3.69" fill="#000" stroke="#00c0c0" stroke-width="1"/>
<line x1="766.06" y1="301.59" x2="766.06" y2="306.76" stroke="#00c0c0" stroke-width="1" />
<rect x="762.06" y="302.34" width="8" height="3.66" fill="#00c0c0" />
<line x1="772.87" y1="302.43" x2="772.87" y2="307.91" stroke="#00c0c0" stroke-width="1" />
<rect x="768.87" y="303.16" width="8" height="3.35" fill="#00c0c0" />
<line x1="779.68" y1="301.45" x2="779.68" y2="308.98" stroke="#00c0c0" stroke-width="1" />
<rect x="775.68" y="303.19" width="8" height="4.62" fill="#00c0c0" />
<line x1="786.5" y1="302.4" x2="786.5" y2="308.79" stroke="#00c0c0" stroke-width="1" />
<rect x="782.5" y="304.08" width="8" height="4.18" fill="#00c0c0" />
<line x1="793.31" y1="302.88" x2="793.31" y2="304.74" stroke="#00c0c0" stroke-width="1" />
<line x1="793.31" y1="308.93" x2="793.31" y2="310.58" stroke="#00c0c0" stroke-width="1" />
<rect x="789.81" y="305.24" width="7" height="3.19" fill="#000" stroke="#00c0c0" stroke-width="1"/>
<line x1="800.12" y1="304.16" x2="800.12" y2="310.36" stroke="#00c0c0" stroke-width="1" />
<rect x="796.12" y="305.32" width="8" height="4.35" fill="#00c0c0" />
<line x1="806.93" y1="305.5" x2="806.93" y2="314" stroke="#00c0c0" stroke-width="1" />
<rect x="802.93" y="306.8" width="8" height="6.5" fill="#00c0c0" />
<line x1="813.75" y1="311" x2="813.75" y2="317" stroke="#00c0c0" stroke-width="1" />
<rect x="809.75" y="312" width="8" height="4" fill="#00c0c0" />
<line x1="820.56" y1="311.5" x2="820.56" y2="317" stroke="#00c0c0" stroke-width="1" />
<rect x="816.56" y="312.5" width="8" height="3.5" fill="#00c0c0" />
<line x1="827.37" y1="310.11" x2="827.37" y2="314.06" stroke="#00c0c0" stroke-width="1" />
<rect x="823.37" y="310.81" width="8" height="1.99" fill="#00c0c0" />
<line x1="834.19" y1="310.02" x2="834.19" y2="310.8" stroke="#00c0c0" stroke-width="1" />
<line x1="834.19" y1="312.97" x2="834.19" y2="313.75" stroke="#00c0c0" stroke-width="1" />
<rect x="830.69" y="311.3" width="7" height="1.17" fill="#000" stroke="#00c0c0" stroke-width="1"/>
<line x1="841" y1="309.73" x2="841" y2="313.55" stroke="#00c0c0" stroke-width="1" />
<rect x="837" y="310.9" width="8" height="2.15" fill="#00c0c0" />
<line x1="847.81" y1="310.91" x2="847.81" y2="314.11" stroke="#00c0c0" stroke-width="1" />
<rect x="843.81" y="311.39" width="8" height="1.33" fill="#00c0c0" />
<line x1="854.62" y1="310.66" x2="854.62" y2="314.44" stroke="#00c0c0" stroke-width="1" />
<rect x="850.62" y="311.14" width="8" height="2.01" fill="#00c0c0" />
<line x1="861.44" y1="310.05" x2="861.44" y2="311.14" stroke="#00c0c0" stroke-width="1" />
<line x1="861.44" y1="313.32" x2="861.44" y2="314.04" stroke="#00c0c0" stroke-width="1" />
<rect x="857.94" y="311.64" width="7" height="1.18" fill="#000" stroke="#00c0c0" stroke-width="1"/>
<line x1="868.25" y1="310.98" x2="868.25" y2="313.51" stroke="#00c0c0" stroke-width="1" />
<rect x="864.25" y="311.44" width="8" height="1.75" fill="#00c0c0" />
<line x1="875.06" y1="310.23" x2="875.06" y2="314.42" stroke="#00c0c0" stroke-width="1" />
<rect x="871.06" y="311.31" width="8" height="2.17" fill="#00c0c0" />
<line x1="881.88" y1="307.5" x2="881.88" y2="311" stroke="#ff0000" stroke-width="1" />
<rect x="877.88" y="308.5" width="8" height="2.1" fill="#ff0000" />
<line x1="888.69" y1="307" x2="888.69" y2="311" stroke="#ff0000" stroke-width="1" />
<rect x="884.69" y="308.3" width="8" height="2.3" fill="#ff0000" />
<line x1="895.5" y1="310" x2="895.5" y2="313.5" stroke="#00c0c0" stroke-width="1" />
<rect x="891.5" y="311" width="8" height="2" fill="#00c0c0" />
<line x1="902.32" y1="310.5" x2="902.32" y2="313.5" stroke="#00c0c0" stroke-width="1" />
<rect x="898.32" y="311.5" width="8" height="1.5" fill="#00c0c0" />
<line x1="909.13" y1="310" x2="909.13" y2="311" stroke="#00c0c0" stroke-width="1" />
<line x1="909.13" y1="314.5" x2="909.13" y2="315" stroke="#00c0c0" stroke-width="1" />
<rect x="905.63" y="311.5" width="7" height="2.5" fill="#000" stroke="#00c0c0" stroke-width="1"/>
<line x1="915.94" y1="308" x2="915.94" y2="311.5" stroke="#ff0000" stroke-width="1" />
<rect x="911.94" y="308.8" width="8" height="2.2" fill="#ff0000" />
<line x1="922.75" y1="307.5" x2="922.75" y2="313" stroke="#ff0000" stroke-width="1" />
<rect x="918.75" y="308.5" width="8" height="2.5" fill="#ff0000" />
<line x1="929.57" y1="307.8" x2="929.57" y2="311.5" stroke="#ff0000" stroke-width="1" />
<rect x="925.57" y="308.5" width="8" height="2.5" fill="#ff0000" />
<line x1="936.38" y1="295.5" x2="936.38" y2="297.5" stroke="#ff0000" stroke-width="1" />
<line x1="936.38" y1="307.5" x2="936.38" y2="308" stroke="#ff0000" stroke-width="1" />
<rect x="932.88" y="298" width="7" height="9" fill="none" stroke="#ff0000" stroke-width="1"/>
<line x1="943.19" y1="296.5" x2="943.19" y2="297.6" stroke="#ff0000" stroke-width="1" />
<line x1="943.19" y1="305.6" x2="943.19" y2="306" stroke="#ff0000" stroke-width="1" />
<rect x="939.69" y="298.1" width="7" height="7" fill="none" stroke="#ff0000" stroke-width="1"/>
<line x1="950.01" y1="296" x2="950.01" y2="302.5" stroke="#ff0000" stroke-width="1" />
<rect x="946.01" y="297.6" width="8" height="4.2" fill="#ff0000" />
<line x1="956.82" y1="299.5" x2="956.82" y2="304" stroke="#ff0000" stroke-width="1" />
<rect x="952.82" y="301.4" width="8" height="2.1" fill="#ff0000" />
<line x1="963.63" y1="300.5" x2="963.63" y2="304" stroke="#ff0000" stroke-width="1" />
<rect x="959.63" y="301.4" width="8" height="2.1" fill="#ff0000" />
<line x1="970.45" y1="301" x2="970.45" y2="303.5" stroke="#ff0000" stroke-width="1" />
<rect x="966.45" y="301.8" width="8" height="1.2" fill="#ff0000" />
<line x1="977.26" y1="301.3" x2="977.26" y2="303.5" stroke="#ff0000" stroke-width="1" />
<rect x="973.26" y="301.9" width="8" height="1.1" fill="#ff0000" />
<line x1="984.07" y1="301.5" x2="984.07" y2="305.5" stroke="#00c0c0" stroke-width="1" />
<rect x="980.07" y="302.2" width="8" height="1.5" fill="#00c0c0" />
<line x1="990.88" y1="293.8" x2="990.88" y2="299.7" stroke="#ff0000" stroke-width="1" />
<line x1="990.88" y1="302.7" x2="990.88" y2="305" stroke="#ff0000" stroke-width="1" />
<rect x="987.38" y="300.2" width="7" height="2" fill="none" stroke="#ff0000" stroke-width="1"/>
<line x1="997.7" y1="296.5" x2="997.7" y2="297.2" stroke="#ff0000" stroke-width="1" />
<line x1="997.7" y1="301.8" x2="997.7" y2="302.5" stroke="#ff0000" stroke-width="1" />
<rect x="994.2" y="297.7" width="7" height="3.6" fill="none" stroke="#ff0000" stroke-width="1"/>
<line x1="1004.51" y1="296" x2="1004.51" y2="300.5" stroke="#ff0000" stroke-width="1" />
<rect x="1000.51" y="297.6" width="8" height="2.4" fill="#ff0000" />
<line x1="1011.32" y1="295" x2="1011.32" y2="297.6" stroke="#ff0000" stroke-width="1" />
<line x1="1011.32" y1="300" x2="1011.32" y2="300.5" stroke="#ff0000" stroke-width="1" />
<rect x="1007.82" y="298.1" width="7" height="1.4" fill="none" stroke="#ff0000" stroke-width="1"/>
<line x1="1018.14" y1="296" x2="1018.14" y2="300.3" stroke="#ff0000" stroke-width="1" />
<rect x="1014.14" y="297.2" width="8" height="2.5" fill="#ff0000" />
<line x1="1024.95" y1="297.3" x2="1024.95" y2="300.6" stroke="#ff0000" stroke-width="1" />
<rect x="1020.95" y="298" width="8" height="2.2" fill="#ff0000" />
<line x1="1031.76" y1="297.3" x2="1031.76" y2="300.5" stroke="#00c0c0" stroke-width="1" />
<rect x="1027.76" y="298" width="8" height="2" fill="#00c0c0" />
<line x1="1038.58" y1="299.5" x2="1038.58" y2="302" stroke="#00c0c0" stroke-width="1" />
<rect x="1034.58" y="300.3" width="8" height="1.2" fill="#00c0c0" />
<line x1="1045.39" y1="300.5" x2="1045.39" y2="305.5" stroke="#00c0c0" stroke-width="1" />
<rect x="1041.39" y="301.8" width="8" height="3" fill="#00c0c0" />
<line x1="1052.2" y1="302" x2="1052.2" y2="303" stroke="#00c0c0" stroke-width="1" />
<line x1="1052.2" y1="305.6" x2="1052.2" y2="306.8" stroke="#00c0c0" stroke-width="1" />
<rect x="1048.7" y="303.5" width="7" height="1.6" fill="#000" stroke="#00c0c0" stroke-width="1"/>
<line x1="1059.01" y1="301.5" x2="1059.01" y2="305.3" stroke="#00c0c0" stroke-width="1" />
<rect x="1055.01" y="302.7" width="8" height="2.1" fill="#00c0c0" />
<line x1="1065.83" y1="298" x2="1065.83" y2="300" stroke="#00c0c0" stroke-width="1" />
<line x1="1065.83" y1="301.2" x2="1065.83" y2="302" stroke="#00c0c0" stroke-width="1" />
<rect x="1062.33" y="300.5" width="7" height="0.6" fill="#000" stroke="#00c0c0" stroke-width="1"/>
<line x1="1072.64" y1="299.5" x2="1072.64" y2="300.1" stroke="#00c0c0" stroke-width="1" />
<line x1="1072.64" y1="303.7" x2="1072.64" y2="304" stroke="#00c0c0" stroke-width="1" />
<rect x="1069.14" y="300.6" width="7" height="2.6" fill="#000" stroke="#00c0c0" stroke-width="1"/>
<rect x="1068.64" y="301" width="8" height="1.2" fill="#0000ff" />
<line x1="1079.45" y1="298" x2="1079.45" y2="303.2" stroke="#ff0000" stroke-width="1" />
<rect x="1075.45" y="300.1" width="8" height="2.7" fill="#ff0000" />
<rect x="1075.45" y="300.8" width="8" height="1.4" fill="#ffff00" />
<line x1="1086.27" y1="293.8" x2="1086.27" y2="302" stroke="#ff0000" stroke-width="1" />
<rect x="1082.27" y="298.9" width="8" height="2.5" fill="#ff0000" />
<line x1="1093.08" y1="298" x2="1093.08" y2="300" stroke="#00c0c0" stroke-width="1" />
<line x1="1093.08" y1="303.7" x2="1093.08" y2="304.5" stroke="#00c0c0" stroke-width="1" />
<rect x="1089.58" y="300.5" width="7" height="2.7" fill="#000" stroke="#00c0c0" stroke-width="1"/>
<rect x="1089.08" y="301" width="8" height="1.2" fill="#0000ff" />
<line x1="1099.89" y1="302" x2="1099.89" y2="302.7" stroke="#00c0c0" stroke-width="1" />
<line x1="1099.89" y1="305" x2="1099.89" y2="305.5" stroke="#00c0c0" stroke-width="1" />
<rect x="1096.39" y="303.2" width="7" height="1.3" fill="#000" stroke="#00c0c0" stroke-width="1"/>
<line x1="1106.71" y1="300" x2="1106.71" y2="303.5" stroke="#00c0c0" stroke-width="1" />
<rect x="1102.71" y="301" width="8" height="1.3" fill="#00c0c0" />
<line x1="1113.52" y1="300.3" x2="1113.52" y2="303" stroke="#00c0c0" stroke-width="1" />
<rect x="1109.52" y="301" width="8" height="1.3" fill="#00c0c0" />
<line x1="1120.33" y1="296" x2="1120.33" y2="301.5" stroke="#ff0000" stroke-width="1" />
<rect x="1116.33" y="298" width="8" height="3" fill="#ff0000" />
<line x1="1127.14" y1="295" x2="1127.14" y2="303.3" stroke="#ff0000" stroke-width="1" />
<rect x="1123.14" y="298" width="8" height="4.8" fill="#ff0000" />
<rect x="1123.14" y="300.1" width="8" height="1.7" fill="#ffff00" />
<line x1="1133.96" y1="298" x2="1133.96" y2="299.3" stroke="#00c0c0" stroke-width="1" />
<line x1="1133.96" y1="303.1" x2="1133.96" y2="306" stroke="#00c0c0" stroke-width="1" />
<rect x="1130.46" y="299.8" width="7" height="2.8" fill="#000" stroke="#00c0c0" stroke-width="1"/>
<rect x="1130.46" y="300" width="7" height="2.2" fill="#0000ff" />
<line x1="1140.77" y1="299.5" x2="1140.77" y2="300.1" stroke="#ff0000" stroke-width="1" />
<line x1="1140.77" y1="303.7" x2="1140.77" y2="304" stroke="#ff0000" stroke-width="1" />
<rect x="1137.27" y="300.6" width="7" height="2.6" fill="none" stroke="#ff0000" stroke-width="1"/>
<rect x="1137.27" y="301" width="7" height="1.2" fill="#0000ff" />
<line x1="1147.58" y1="298" x2="1147.58" y2="301.5" stroke="#ff0000" stroke-width="1" />
<rect x="1143.58" y="299.3" width="8" height="1.7" fill="#ff0000" />
<line x1="1154.4" y1="295" x2="1154.4" y2="300.5" stroke="#ff0000" stroke-width="1" />
<rect x="1150.4" y="297.2" width="8" height="2.1" fill="#ff0000" />
<line x1="1161.21" y1="297.5" x2="1161.21" y2="298" stroke="#ff0000" stroke-width="1" />
<line x1="1161.21" y1="300" x2="1161.21" y2="300.5" stroke="#ff0000" stroke-width="1" />
<rect x="1157.71" y="298.5" width="7" height="1" fill="none" stroke="#ff0000" stroke-width="1"/>
<line x1="1168.02" y1="293.8" x2="1168.02" y2="301.8" stroke="#ff0000" stroke-width="1" />
<rect x="1164.02" y="296" width="8" height="2.9" fill="#ff0000" />
<line x1="1174.84" y1="296.5" x2="1174.84" y2="300.5" stroke="#ff0000" stroke-width="1" />
<rect x="1170.84" y="297.2" width="8" height="1.7" fill="#ff0000" />
<line x1="1181.65" y1="297" x2="1181.65" y2="299.2" stroke="#ff0000" stroke-width="1" />
<rect x="1177.65" y="297.6" width="8" height="1.1" fill="#ff0000" />
<line x1="1188.46" y1="288.3" x2="1188.46" y2="289.2" stroke="#ff0000" stroke-width="1" />
<line x1="1188.46" y1="298" x2="1188.46" y2="298.5" stroke="#ff0000" stroke-width="1" />
<rect x="1184.96" y="289.7" width="7" height="7.8" fill="none" stroke="#ff0000" stroke-width="1"/>
<line x1="1195.27" y1="281.4" x2="1195.27" y2="286.5" stroke="#ff0000" stroke-width="1" />
<line x1="1195.27" y1="288.3" x2="1195.27" y2="289" stroke="#ff0000" stroke-width="1" />
<rect x="1191.77" y="287" width="7" height="0.8" fill="none" stroke="#ff0000" stroke-width="1"/>
<line x1="1202.09" y1="276.5" x2="1202.09" y2="277.4" stroke="#ff0000" stroke-width="1" />
<line x1="1202.09" y1="288.9" x2="1202.09" y2="290" stroke="#ff0000" stroke-width="1" />
<rect x="1198.59" y="277.9" width="7" height="10.5" fill="none" stroke="#ff0000" stroke-width="1"/>
<line x1="1208.9" y1="255.5" x2="1208.9" y2="256.4" stroke="#ff0000" stroke-width="1" />
<line x1="1208.9" y1="271.3" x2="1208.9" y2="276.6" stroke="#ff0000" stroke-width="1" />
<rect x="1205.4" y="256.9" width="7" height="13.9" fill="none" stroke="#ff0000" stroke-width="1"/>
<line x1="1215.71" y1="233.3" x2="1215.71" y2="233.3" stroke="#ff0000" stroke-width="1" />
<line x1="1215.71" y1="237.6" x2="1215.71" y2="246.7" stroke="#ff0000" stroke-width="1" />
<rect x="1212.21" y="233.8" width="7" height="3.3" fill="none" stroke="#ff0000" stroke-width="1"/>
<rect x="1213.21" y="233.8" width="5" height="1.8" fill="#ff0000" />
<line x1="1222.53" y1="208.3" x2="1222.53" y2="229.7" stroke="#ff0000" stroke-width="1" />
<rect x="1218.03" y="207.8" width="9" height="1" fill="#ff0000" />
<rect x="1221.03" y="207.7" width="3" height="1.2" fill="#0000ff" />
<line x1="1229.34" y1="206.3" x2="1229.34" y2="236.9" stroke="#ff0000" stroke-width="1" />
<rect x="1225.34" y="216.2" width="8" height="20.7" fill="#ff0000" />
<rect x="1227.84" y="226" width="3" height="10.9" fill="#0000ff" />
<line x1="1236.15" y1="230" x2="1236.15" y2="250.5" stroke="#00c0c0" stroke-width="1" />
<rect x="1232.15" y="235.5" width="8" height="14.4" fill="#00c0c0" />
<line x1="1242.97" y1="239" x2="1242.97" y2="249" stroke="#00c0c0" stroke-width="1" />
<line x1="1242.97" y1="251.3" x2="1242.97" y2="252.8" stroke="#00c0c0" stroke-width="1" />
<rect x="1239.47" y="249.5" width="7" height="1.3" fill="#000" stroke="#00c0c0" stroke-width="1"/>
<line x1="1249.78" y1="247" x2="1249.78" y2="251" stroke="#00c0c0" stroke-width="1" />
<line x1="1249.78" y1="252.5" x2="1249.78" y2="260" stroke="#00c0c0" stroke-width="1" />
<rect x="1246.28" y="251.5" width="7" height="0.6" fill="#000" stroke="#00c0c0" stroke-width="1"/>
<line x1="1256.59" y1="249.5" x2="1256.59" y2="257" stroke="#00c0c0" stroke-width="1" />
<rect x="1252.59" y="250.6" width="8" height="5.8" fill="#00c0c0" />
<line x1="1263.4" y1="253" x2="1263.4" y2="254" stroke="#00c0c0" stroke-width="1" />
<line x1="1263.4" y1="259.3" x2="1263.4" y2="260.5" stroke="#00c0c0" stroke-width="1" />
<rect x="1259.9" y="254.5" width="7" height="4.3" fill="#000" stroke="#00c0c0" stroke-width="1"/>
<rect x="1259.9" y="254.3" width="7" height="1.3" fill="#0000ff" />
<line x1="1270.22" y1="253.5" x2="1270.22" y2="260" stroke="#00c0c0" stroke-width="1" />
<rect x="1266.22" y="254.2" width="8" height="5.1" fill="#00c0c0" />
<rect x="1266.22" y="254.3" width="8" height="1.3" fill="#0000ff" />
<line x1="1277.03" y1="239" x2="1277.03" y2="249.6" stroke="#00c0c0" stroke-width="1" />
<line x1="1277.03" y1="259.3" x2="1277.03" y2="260.5" stroke="#00c0c0" stroke-width="1" />
<rect x="1273.53" y="250.1" width="7" height="8.7" fill="#000" stroke="#00c0c0" stroke-width="1"/>
<line x1="1283.84" y1="249.5" x2="1283.84" y2="253" stroke="#00c0c0" stroke-width="1" />
<rect x="1279.84" y="250" width="8" height="2" fill="#00c0c0" />
<line x1="1290.66" y1="249.5" x2="1290.66" y2="252.5" stroke="#00c0c0" stroke-width="1" />
<rect x="1286.66" y="250.5" width="8" height="1.5" fill="#00c0c0" />
<line x1="1297.47" y1="246" x2="1297.47" y2="250" stroke="#00c0c0" stroke-width="1" />
<line x1="1297.47" y1="251.5" x2="1297.47" y2="252" stroke="#00c0c0" stroke-width="1" />
<rect x="1293.97" y="250.5" width="7" height="0.6" fill="#000" stroke="#00c0c0" stroke-width="1"/>
<line x1="1304.28" y1="248.5" x2="1304.28" y2="254" stroke="#00c0c0" stroke-width="1" />
<rect x="1300.28" y="249.5" width="8" height="1.5" fill="#00c0c0" />
<line x1="1311.1" y1="227" x2="1311.1" y2="234.5" stroke="#ff0000" stroke-width="1" />
<line x1="1311.1" y1="245.5" x2="1311.1" y2="247.7" stroke="#ff0000" stroke-width="1" />
<rect x="1307.6" y="235" width="7" height="10" fill="none" stroke="#ff0000" stroke-width="1"/>
<rect x="1309.6" y="234.5" width="3" height="6.5" fill="#ff0000" />
<line x1="1317.91" y1="236" x2="1317.91" y2="237" stroke="#ff0000" stroke-width="1" />
<line x1="1317.91" y1="241.4" x2="1317.91" y2="245" stroke="#ff0000" stroke-width="1" />
<rect x="1314.41" y="237.5" width="7" height="3.4" fill="none" stroke="#ff0000" stroke-width="1"/>
<rect x="1316.21" y="237.3" width="3.4" height="2.7" fill="#0000ff" />
<line x1="1324.72" y1="224" x2="1324.72" y2="233.3" stroke="#ff0000" stroke-width="1" />
<line x1="1324.72" y1="236.6" x2="1324.72" y2="237.5" stroke="#ff0000" stroke-width="1" />
<rect x="1321.22" y="233.8" width="7" height="2.3" fill="none" stroke="#ff0000" stroke-width="1"/>
<line x1="1331.53" y1="208" x2="1331.53" y2="208" stroke="#ff0000" stroke-width="1" />
<line x1="1331.53" y1="228.5" x2="1331.53" y2="232.9" stroke="#ff0000" stroke-width="1" />
<rect x="1328.03" y="208.5" width="7" height="19.5" fill="none" stroke="#ff0000" stroke-width="1"/>
<rect x="1329.93" y="208.7" width="3.2" height="10" fill="#ffffff" />
<line x1="1338.35" y1="181.2" x2="1338.35" y2="181.2" stroke="#ff0000" stroke-width="1" />
<line x1="1338.35" y1="198.2" x2="1338.35" y2="203" stroke="#ff0000" stroke-width="1" />
<rect x="1334.85" y="181.7" width="7" height="16" fill="none" stroke="#ff0000" stroke-width="1"/>
<rect x="1336.85" y="181.2" width="3" height="8.8" fill="#ff0000" />
<rect x="1340.66" y="150" width="9" height="16" fill="#ff0000" />
<rect x="1340.66" y="166" width="9" height="16.7" fill="#ff00ff" />
<rect x="1349.16" y="180.2" width="7" height="2.5" fill="#ff00ff" />
<line x1="1345.16" y1="182" x2="1345.16" y2="184.5" stroke="#ff0000" stroke-width="1" />
<line x1="1351.97" y1="151" x2="1351.97" y2="179.6" stroke="#ff0000" stroke-width="1" />
<line x1="1358.79" y1="151" x2="1358.79" y2="151" stroke="#ff0000" stroke-width="1" />
<line x1="1358.79" y1="189.5" x2="1358.79" y2="202" stroke="#ff0000" stroke-width="1" />
<rect x="1355.29" y="151.5" width="7" height="37.5" fill="none" stroke="#ff0000" stroke-width="1"/>
<rect x="1357.29" y="151" width="3" height="20" fill="#ff0000" />
<line x1="1365.6" y1="118.4" x2="1365.6" y2="145.6" stroke="#ff0000" stroke-width="1" />
<rect x="1361.1" y="117.9" width="7.5" height="1" fill="#ff00ff" />
<line x1="1372.41" y1="81.9" x2="1372.41" y2="109.7" stroke="#ff0000" stroke-width="1" />
<line x1="1372.41" y1="139.8" x2="1372.41" y2="150.6" stroke="#ff0000" stroke-width="1" />
<rect x="1368.91" y="110.2" width="7" height="29.1" fill="none" stroke="#ff0000" stroke-width="1"/>
<rect x="1368.41" y="109.7" width="8" height="16.1" fill="#ff00ff" />
</g>
<polyline points="163.7,299 200,294.2 239.4,288.9" fill="none" stroke="#ffff00" stroke-width="3" />
<polyline points="315,287.3 341,287.3" fill="none" stroke="#ffff00" stroke-width="2.4" />
<polyline points="490.3,299.7 503.3,298.3 507.6,296.8 517.7,292.5 525,289.6 538,288.2 564,287 590,286.5" fill="none" stroke="#ffff00" stroke-width="3" />
<polyline points="715,298 738,298" fill="none" stroke="#ffff00" stroke-width="2.4" />
<polyline points="878,312 894,311.5" fill="none" stroke="#ffff00" stroke-width="2.4" />
<polyline points="911,312.5 920,311.9 940,307.7 947,306.5 960,304.6 968,304.2 980,304 995,303 1001,301.8 1015,301 1028,300.4" fill="none" stroke="#ffff00" stroke-width="2.4" />
<polyline points="1143,300.6 1150,300.2 1165,300 1172,299.4 1192,299" fill="none" stroke="#ffff00" stroke-width="2.4" />
<polyline points="1236,256.8 1240,256 1253,254.3 1270,254 1284,252.8 1306,250.8 1320.6,248" fill="none" stroke="#ffff00" stroke-width="2.4" />
<polyline points="0,281 40,284.5 90,290 130,294.5 164,298.5" fill="none" stroke="#0000ff" stroke-width="2.6" />
<polyline points="341,286 354,286.8 381.4,291.2 417.5,293.8 443.5,297.5 469.4,299.6" fill="none" stroke="#0000ff" stroke-width="2.2" />
<polyline points="592.7,286 640,290.5 699.4,297.5 755,299.3 785,302.5 812.6,306 834,310.4 877.5,311.2 912,312.3" fill="none" stroke="#0000ff" stroke-width="2.2" />
<polyline points="1029,300.9 1049.4,301 1053,302 1062.8,302" fill="none" stroke="#0000ff" stroke-width="2.2" />
<polyline points="1070,301.6 1076,301.6" fill="none" stroke="#0000ff" stroke-width="2.2" />
<polyline points="1131,301.2 1145,301.6" fill="none" stroke="#0000ff" stroke-width="2.2" />
<polyline points="469.4,299.6 492,300.4" fill="none" stroke="#0000ff" stroke-width="1.4" />
<polyline points="1089,301.8 1117,301.8" fill="none" stroke="#00c0c0" stroke-width="1.6" />
<rect x="716" y="295" width="21" height="2" fill="#ff0000" />
<rect x="727" y="294" width="1" height="1.5" fill="#ff0000" />
<polyline points="0,263 228.6,263 234.4,283 237,288.2 1197.8,288.2" fill="none" stroke="#ffff00" stroke-width="2" />
<polyline points="1240.7,235.9 1345.2,235.9" fill="none" stroke="#ffff00" stroke-width="2.2" />
<polyline points="1229.6,305.1 1231.3,287.5 1234,265.8 1235.4,250.6 1304.7,250.6 1312,245.3 1326,244.1 1345.6,244.1 1346,231.6 1347.8,231.3 1349.7,220.5 1350.5,209.3 1352.8,193.9 1372.6,193.9" fill="none" stroke="#ff00ff" stroke-width="1.6" stroke-linejoin="miter"/>
<polyline points="1351.6,181.5 1351.2,209" fill="none" stroke="#ffff00" stroke-width="1.6" />
<g shape-rendering="crispEdges">
<rect x="1192" y="294.7" width="7.2" height="3.6" fill="#ffff00" />
<rect x="1199.2" y="291.8" width="7.3" height="4.4" fill="#ffff00" />
<rect x="1205.8" y="286" width="7.2" height="8" fill="#ffff00" />
<rect x="1212.3" y="278" width="7.2" height="10.2" fill="#ffff00" />
<rect x="1219.2" y="267.3" width="7.2" height="13" fill="#ffff00" />
<rect x="1226" y="259.3" width="7.2" height="9.4" fill="#ffff00" />
<rect x="1232.5" y="252.8" width="7.2" height="8" fill="#ffff00" />
<rect x="1307.6" y="247.9" width="13" height="3.5" fill="#ffff00" />
<rect x="1320.6" y="243.4" width="7.3" height="5.1" fill="#ffff00" />
<rect x="1327.9" y="238.2" width="7.1" height="6.7" fill="#ffff00" />
<rect x="1335" y="230.4" width="7" height="9.4" fill="#ffff00" />
<rect x="1342" y="218.8" width="6.8" height="12.6" fill="#ffff00" />
<rect x="1348.8" y="210.9" width="6.8" height="9.5" fill="#ffff00" />
<rect x="1355.6" y="203" width="6.7" height="9.3" fill="#ffff00" />
<rect x="1362.3" y="188.9" width="6.8" height="14.9" fill="#ffff00" />
<rect x="1369.1" y="176.2" width="7.3" height="13.3" fill="#ffff00" />
</g>
</g>
<g font-family='"Liberation Sans","Noto Sans CJK SC",sans-serif' font-size="12">
<text x="935" y="334.5" fill="#ff0000" font-size="11" text-anchor="middle" font-weight="bold">S</text>
<path d="M932.5 326.5 L935 324 L937.5 326.5 Z" fill="#ff0000"/>
<text x="1153" y="334.5" fill="#ff0000" font-size="11" text-anchor="middle" font-weight="bold">S</text>
<path d="M1150.5 326.5 L1153 324 L1155.5 326.5 Z" fill="#ff0000"/>
<text x="827" y="323.5" fill="#ff00ff" font-size="11" text-anchor="start" >标</text>
<text x="1318" y="91.8" fill="#c8c8c8" font-size="12" text-anchor="start" >11.31</text>
<path d="M1351 88.5 L1356 87.8 M1358 87.4 L1370.5 84.3 M1365.5 82.2 L1371 84.2 L1367 88" stroke="#c8c8c8" stroke-width="1" fill="none"/>
<rect x="1358" y="322" width="7" height="12" fill="#800000" />
<rect x="1365" y="322" width="11" height="12" fill="#804000" />
<text x="1358.3" y="332.5" fill="#fff" font-size="11" text-anchor="start" >3</text>
<text x="1365" y="332.5" fill="#fff" font-size="11" text-anchor="start" >榜</text>
</g>
<path d="M1348 30.5 L1352.5 35.5 L1348 40.5 L1343.5 35.5 Z" fill="none" stroke="#808080" stroke-width="1"/>
<rect x="1361.5" y="30.5" width="12" height="10" rx="2" fill="none" stroke="#808080" stroke-width="1"/>
<rect x="1367.5" y="32.5" width="4" height="6" fill="#808080" />
<g shape-rendering="crispEdges">
<rect x="1378" y="57" width="49" height="15" fill="#0a246a" />
<rect x="1377" y="56" width="50" height="1" fill="#b80000" />
<rect x="1377" y="72" width="50" height="1" fill="#b80000" />
</g>
<text x="1377.5" y="68.3" fill="#e0e0e0" font-size="12" text-anchor="start" font-family='"Liberation Sans","Noto Sans CJK SC",sans-serif'>11.59</text>
<g clip-path="url(#cl)">
<g shape-rendering="crispEdges">
<line x1="0" y1="468.5" x2="1372" y2="468.5" stroke="#fff" stroke-width="1" stroke-dasharray="4 3"/>
<rect x="3" y="455.4" width="1" height="13" fill="#ff0000" />
<rect x="10" y="456.4" width="1" height="12" fill="#ff0000" />
<rect x="71" y="458.45" width="1" height="9.95" fill="#ff0000" />
<rect x="78" y="458.45" width="1" height="9.95" fill="#ff0000" />
<rect x="85" y="459.26" width="1" height="9.14" fill="#ff0000" />
<rect x="92" y="450.98" width="1" height="17.42" fill="#ff0000" />
<rect x="99" y="441.03" width="1" height="27.37" fill="#ff0000" />
<rect x="105" y="434.81" width="1" height="33.59" fill="#ff0000" />
<rect x="112" y="439.79" width="1" height="28.61" fill="#ff0000" />
<rect x="119" y="454.28" width="1" height="14.12" fill="#ff0000" />
<rect x="126" y="457.58" width="1" height="10.82" fill="#ff0000" />
<rect x="133" y="457.58" width="1" height="10.82" fill="#ff0000" />
<rect x="140" y="458.07" width="1" height="10.33" fill="#ff0000" />
<rect x="146" y="453.47" width="1" height="14.93" fill="#ff0000" />
<rect x="153" y="453.78" width="1" height="14.62" fill="#ff0000" />
<rect x="160" y="428.59" width="1" height="39.81" fill="#ff0000" />
<rect x="167" y="401.53" width="1" height="66.87" fill="#ff0000" />
<rect x="174" y="414.91" width="1" height="53.49" fill="#ff0000" />
<rect x="180" y="429.34" width="1" height="39.06" fill="#ff0000" />
<rect x="187" y="422.68" width="1" height="45.72" fill="#ff0000" />
<rect x="194" y="455.09" width="1" height="13.31" fill="#ff0000" />
<rect x="201" y="455.96" width="1" height="12.44" fill="#ff0000" />
<rect x="208" y="462.55" width="1" height="5.85" fill="#ff0000" />
<rect x="221" y="465.1" width="1" height="3.3" fill="#ff0000" />
<rect x="242" y="445.14" width="1" height="23.26" fill="#ff0000" />
<rect x="249" y="465.1" width="1" height="3.3" fill="#ff0000" />
<rect x="310" y="461.74" width="1" height="6.66" fill="#ff0000" />
<rect x="317" y="438.11" width="1" height="30.29" fill="#ff0000" />
<rect x="324" y="450.98" width="1" height="17.42" fill="#ff0000" />
<rect x="330" y="452.6" width="1" height="15.8" fill="#ff0000" />
<rect x="337" y="453.78" width="1" height="14.62" fill="#ff0000" />
<rect x="344" y="453.78" width="1" height="14.62" fill="#ff0000" />
<rect x="351" y="455.96" width="1" height="12.44" fill="#ff0000" />
<rect x="358" y="458.07" width="1" height="10.33" fill="#ff0000" />
<rect x="371" y="463.42" width="1" height="4.98" fill="#ff0000" />
<rect x="378" y="465.91" width="1" height="2.49" fill="#ff0000" />
<rect x="385" y="465.91" width="1" height="2.49" fill="#ff0000" />
<rect x="392" y="465.1" width="1" height="3.3" fill="#ff0000" />
<rect x="398" y="464.23" width="1" height="4.17" fill="#ff0000" />
<rect x="412" y="461.74" width="1" height="6.66" fill="#ff0000" />
<rect x="453" y="462.55" width="1" height="5.85" fill="#ff0000" />
<rect x="460" y="459.26" width="1" height="9.14" fill="#ff0000" />
<rect x="467" y="458.07" width="1" height="10.33" fill="#ff0000" />
<rect x="473" y="457.08" width="1" height="11.32" fill="#ff0000" />
<rect x="480" y="456.77" width="1" height="11.63" fill="#ff0000" />
<rect x="487" y="461.74" width="1" height="6.66" fill="#ff0000" />
<rect x="494" y="457.58" width="1" height="10.82" fill="#ff0000" />
<rect x="501" y="444.27" width="1" height="24.13" fill="#ff0000" />
<rect x="507" y="417.64" width="1" height="50.76" fill="#ff0000" />
<rect x="514" y="431.08" width="1" height="37.32" fill="#ff0000" />
<rect x="521" y="448.5" width="1" height="19.9" fill="#ff0000" />
<rect x="528" y="455.96" width="1" height="12.44" fill="#ff0000" />
<rect x="535" y="465.1" width="1" height="3.3" fill="#ff0000" />
<rect x="542" y="455.96" width="1" height="12.44" fill="#ff0000" />
<rect x="569" y="461.74" width="1" height="6.66" fill="#ff0000" />
<rect x="576" y="458.45" width="1" height="9.95" fill="#ff0000" />
<rect x="582" y="448.12" width="1" height="20.28" fill="#ff0000" />
<rect x="589" y="461.74" width="1" height="6.66" fill="#ff0000" />
<rect x="644" y="467.59" width="1" height="0.81" fill="#ff0000" />
<rect x="664" y="465.91" width="1" height="2.49" fill="#ff0000" />
<rect x="719" y="461.74" width="1" height="6.66" fill="#ff0000" />
<rect x="725" y="449.3" width="1" height="19.1" fill="#ff0000" />
<rect x="732" y="445.63" width="1" height="22.77" fill="#ff0000" />
<rect x="739" y="455.4" width="1" height="13" fill="#ff0000" />
<rect x="746" y="454.28" width="1" height="14.12" fill="#ff0000" />
<rect x="753" y="455.96" width="1" height="12.44" fill="#ff0000" />
<rect x="828" y="458.45" width="1" height="9.95" fill="#ff0000" />
<rect x="834" y="459.26" width="1" height="9.14" fill="#ff0000" />
<rect x="841" y="448.5" width="1" height="19.9" fill="#ff0000" />
<rect x="848" y="440.41" width="1" height="27.99" fill="#ff0000" />
<rect x="855" y="447.63" width="1" height="20.77" fill="#ff0000" />
<rect x="862" y="449.74" width="1" height="18.66" fill="#ff0000" />
<rect x="869" y="448.5" width="1" height="19.9" fill="#ff0000" />
<rect x="875" y="446.44" width="1" height="21.96" fill="#ff0000" />
<rect x="882" y="444.27" width="1" height="24.13" fill="#ff0000" />
<rect x="889" y="455.09" width="1" height="13.31" fill="#ff0000" />
<rect x="896" y="465.1" width="1" height="3.3" fill="#ff0000" />
<rect x="903" y="466.72" width="1" height="1.68" fill="#ff0000" />
<rect x="909" y="465.91" width="1" height="2.49" fill="#ff0000" />
<rect x="916" y="466.72" width="1" height="1.68" fill="#ff0000" />
<rect x="937" y="448.74" width="1" height="19.66" fill="#ff0000" />
<rect x="943" y="453.47" width="1" height="14.93" fill="#ff0000" />
<rect x="950" y="456.77" width="1" height="11.63" fill="#ff0000" />
<rect x="998" y="444.76" width="1" height="23.64" fill="#ff0000" />
<rect x="1005" y="446.44" width="1" height="21.96" fill="#ff0000" />
<rect x="1012" y="432.63" width="1" height="35.76" fill="#ff0000" />
<rect x="1018" y="434.31" width="1" height="34.09" fill="#ff0000" />
<rect x="1025" y="445.14" width="1" height="23.26" fill="#ff0000" />
<rect x="1032" y="445.14" width="1" height="23.26" fill="#ff0000" />
<rect x="1039" y="466.72" width="1" height="1.68" fill="#ff0000" />
<rect x="1080" y="456.77" width="1" height="11.63" fill="#ff0000" />
<rect x="1087" y="442.4" width="1" height="26" fill="#ff0000" />
<rect x="1093" y="446.13" width="1" height="22.27" fill="#ff0000" />
<rect x="1100" y="445.57" width="1" height="22.83" fill="#ff0000" />
<rect x="1107" y="443.71" width="1" height="24.69" fill="#ff0000" />
<rect x="1114" y="427.53" width="1" height="40.87" fill="#ff0000" />
<rect x="1121" y="448.37" width="1" height="20.03" fill="#ff0000" />
<rect x="1127" y="444.64" width="1" height="23.76" fill="#ff0000" />
<rect x="1141" y="457.27" width="1" height="11.13" fill="#ff0000" />
<rect x="1148" y="455.4" width="1" height="13" fill="#ff0000" />
<rect x="1155" y="448.37" width="1" height="20.03" fill="#ff0000" />
<rect x="1162" y="441.84" width="1" height="26.56" fill="#ff0000" />
<rect x="1168" y="416.4" width="1" height="52" fill="#ff0000" />
<rect x="1175" y="436.3" width="1" height="32.1" fill="#ff0000" />
<rect x="1182" y="432.57" width="1" height="35.83" fill="#ff0000" />
<rect x="1189" y="413.04" width="1" height="55.36" fill="#ff0000" />
<rect x="1196" y="390.03" width="1" height="78.37" fill="#ff0000" />
<rect x="1202" y="370.37" width="1" height="98.03" fill="#ff0000" />
<rect x="1209" y="410.31" width="1" height="58.09" fill="#ff0000" />
<rect x="1277" y="464.05" width="1" height="4.35" fill="#ff0000" />
<rect x="1284" y="436.86" width="1" height="31.54" fill="#ff0000" />
<rect x="1291" y="459.51" width="1" height="8.89" fill="#ff0000" />
<rect x="1305" y="459.07" width="1" height="9.33" fill="#ff0000" />
<rect x="1311" y="355.82" width="1" height="112.58" fill="#ff0000" />
<rect x="1318" y="403.71" width="1" height="64.69" fill="#ff0000" />
<rect x="1325" y="386.3" width="1" height="82.1" fill="#ff0000" />
<rect x="1332" y="421.75" width="1" height="46.65" fill="#ff0000" />
<rect x="1373" y="378.21" width="1" height="90.19" fill="#ff0000" />
<rect x="2" y="468.4" width="3" height="13" fill="#0000ff" />
<rect x="9" y="468.4" width="3" height="18.29" fill="#0000ff" />
<rect x="15" y="468.4" width="3" height="18.29" fill="#0000ff" />
<rect x="22" y="468.4" width="3" height="16.61" fill="#0000ff" />
<rect x="29" y="468.4" width="3" height="21.15" fill="#0000ff" />
<rect x="36" y="468.4" width="3" height="16.61" fill="#0000ff" />
<rect x="43" y="468.4" width="3" height="19.9" fill="#0000ff" />
<rect x="49" y="468.4" width="3" height="21.15" fill="#0000ff" />
<rect x="56" y="468.4" width="3" height="17.42" fill="#0000ff" />
<rect x="63" y="468.4" width="3" height="15.8" fill="#0000ff" />
<rect x="70" y="468.4" width="3" height="11.63" fill="#0000ff" />
<rect x="77" y="468.4" width="3" height="14.12" fill="#0000ff" />
<rect x="84" y="468.4" width="3" height="10.82" fill="#0000ff" />
<rect x="90" y="468.4" width="3" height="13.31" fill="#0000ff" />
<rect x="97" y="468.4" width="3" height="6.22" fill="#0000ff" />
<rect x="104" y="468.4" width="3" height="2.99" fill="#0000ff" />
<rect x="111" y="468.4" width="3" height="2.49" fill="#0000ff" />
<rect x="118" y="468.4" width="3" height="1.68" fill="#0000ff" />
<rect x="124" y="468.4" width="3" height="1.68" fill="#0000ff" />
<rect x="131" y="466.72" width="3" height="2.18" fill="#00ffff" />
<rect x="138" y="462.55" width="3" height="6.35" fill="#00ffff" />
<rect x="138" y="466.72" width="3" height="2.18" fill="#ffff00" />
<rect x="145" y="458.45" width="3" height="10.45" fill="#00ffff" />
<rect x="145" y="463.11" width="3" height="5.79" fill="#ffff00" />
<rect x="152" y="453.1" width="3" height="15.8" fill="#00ffff" />
<rect x="152" y="463.13" width="3" height="5.77" fill="#ffff00" />
<rect x="158" y="446.01" width="3" height="22.89" fill="#00ffff" />
<rect x="158" y="463.15" width="3" height="5.75" fill="#ffff00" />
<rect x="165" y="437.61" width="3" height="31.29" fill="#00ffff" />
<rect x="165" y="463.16" width="3" height="5.74" fill="#ffff00" />
<rect x="172" y="446.01" width="3" height="22.89" fill="#00ffff" />
<rect x="172" y="463.18" width="3" height="5.72" fill="#ffff00" />
<rect x="179" y="452.85" width="3" height="16.05" fill="#00ffff" />
<rect x="179" y="463.2" width="3" height="5.7" fill="#ffff00" />
<rect x="186" y="451.79" width="3" height="17.11" fill="#00ffff" />
<rect x="186" y="463.22" width="3" height="5.68" fill="#ffff00" />
<rect x="193" y="454.72" width="3" height="14.18" fill="#00ffff" />
<rect x="193" y="463.23" width="3" height="5.67" fill="#ffff00" />
<rect x="199" y="453.47" width="3" height="15.43" fill="#00ffff" />
<rect x="199" y="463.25" width="3" height="5.65" fill="#ffff00" />
<rect x="206" y="448.5" width="3" height="20.4" fill="#00ffff" />
<rect x="206" y="463.27" width="3" height="5.63" fill="#ffff00" />
<rect x="213" y="449.3" width="3" height="19.6" fill="#00ffff" />
<rect x="213" y="463.29" width="3" height="5.61" fill="#ffff00" />
<rect x="220" y="443.52" width="3" height="25.38" fill="#00ffff" />
<rect x="220" y="463.3" width="3" height="5.6" fill="#ffff00" />
<rect x="227" y="449.3" width="3" height="19.6" fill="#00ffff" />
<rect x="227" y="463.32" width="3" height="5.58" fill="#ffff00" />
<rect x="233" y="442.65" width="3" height="26.25" fill="#00ffff" />
<rect x="233" y="463.34" width="3" height="5.56" fill="#ffff00" />
<rect x="240" y="439.29" width="3" height="29.61" fill="#00ffff" />
<rect x="240" y="463.35" width="3" height="5.55" fill="#ffff00" />
<rect x="247" y="441.47" width="3" height="27.43" fill="#00ffff" />
<rect x="247" y="463.37" width="3" height="5.53" fill="#ffff00" />
<rect x="254" y="445.14" width="3" height="23.76" fill="#00ffff" />
<rect x="254" y="463.39" width="3" height="5.51" fill="#ffff00" />
<rect x="261" y="450.11" width="3" height="18.79" fill="#00ffff" />
<rect x="261" y="463.41" width="3" height="5.49" fill="#ffff00" />
<rect x="268" y="451.42" width="3" height="17.48" fill="#00ffff" />
<rect x="268" y="463.42" width="3" height="5.48" fill="#ffff00" />
<rect x="274" y="452.1" width="3" height="16.8" fill="#00ffff" />
<rect x="281" y="448.12" width="3" height="20.78" fill="#00ffff" />
<rect x="281" y="468.4" width="3" height="0.81" fill="#0000ff" />
<rect x="288" y="446.75" width="3" height="22.15" fill="#00ffff" />
<rect x="288" y="468.4" width="3" height="1.99" fill="#0000ff" />
<rect x="295" y="450.11" width="3" height="18.79" fill="#00ffff" />
<rect x="295" y="468.4" width="3" height="1.83" fill="#0000ff" />
<rect x="302" y="457.58" width="3" height="11.32" fill="#00ffff" />
<rect x="302" y="468.4" width="3" height="1.68" fill="#0000ff" />
<rect x="308" y="459.26" width="3" height="9.64" fill="#00ffff" />
<rect x="308" y="468.4" width="3" height="0.84" fill="#0000ff" />
<rect x="315" y="450.42" width="3" height="18.48" fill="#00ffff" />
<rect x="315" y="465.6" width="3" height="3.3" fill="#ffff00" />
<rect x="322" y="450.98" width="3" height="17.92" fill="#00ffff" />
<rect x="322" y="464.67" width="3" height="4.23" fill="#ffff00" />
<rect x="329" y="446.44" width="3" height="22.46" fill="#00ffff" />
<rect x="329" y="464.67" width="3" height="4.23" fill="#ffff00" />
<rect x="336" y="445.14" width="3" height="23.76" fill="#00ffff" />
<rect x="336" y="464.67" width="3" height="4.23" fill="#ffff00" />
<rect x="342" y="449.3" width="3" height="19.6" fill="#00ffff" />
<rect x="342" y="464.67" width="3" height="4.23" fill="#ffff00" />
<rect x="349" y="458.07" width="3" height="10.83" fill="#00ffff" />
<rect x="349" y="464.67" width="3" height="4.23" fill="#ffff00" />
<rect x="356" y="459.26" width="3" height="9.64" fill="#00ffff" />
<rect x="356" y="464.67" width="3" height="4.23" fill="#ffff00" />
<rect x="363" y="466.72" width="3" height="2.18" fill="#00ffff" />
<rect x="363" y="464.67" width="3" height="4.23" fill="#ffff00" />
<rect x="370" y="468.4" width="3" height="3.3" fill="#0000ff" />
<rect x="370" y="464.67" width="3" height="4.23" fill="#ffff00" />
<rect x="377" y="465.1" width="3" height="3.8" fill="#00ffff" />
<rect x="377" y="464.67" width="3" height="4.23" fill="#ffff00" />
<rect x="383" y="458.76" width="3" height="10.14" fill="#00ffff" />
<rect x="383" y="464.67" width="3" height="4.23" fill="#ffff00" />
<rect x="390" y="464.23" width="3" height="4.67" fill="#00ffff" />
<rect x="390" y="464.67" width="3" height="4.23" fill="#ffff00" />
<rect x="397" y="460.44" width="3" height="8.46" fill="#00ffff" />
<rect x="397" y="464.67" width="3" height="4.23" fill="#ffff00" />
<rect x="404" y="465.1" width="3" height="3.8" fill="#00ffff" />
<rect x="404" y="464.67" width="3" height="4.23" fill="#ffff00" />
<rect x="411" y="464.23" width="3" height="4.67" fill="#00ffff" />
<rect x="411" y="464.67" width="3" height="4.23" fill="#ffff00" />
<rect x="417" y="465.91" width="3" height="2.99" fill="#00ffff" />
<rect x="417" y="464.67" width="3" height="4.23" fill="#ffff00" />
<rect x="424" y="465.1" width="3" height="3.8" fill="#00ffff" />
<rect x="424" y="464.67" width="3" height="4.23" fill="#ffff00" />
<rect x="431" y="462.55" width="3" height="6.35" fill="#00ffff" />
<rect x="431" y="464.67" width="3" height="4.23" fill="#ffff00" />
<rect x="438" y="465.91" width="3" height="2.99" fill="#00ffff" />
<rect x="438" y="464.67" width="3" height="4.23" fill="#ffff00" />
<rect x="445" y="468.4" width="3" height="3.3" fill="#0000ff" />
<rect x="445" y="464.67" width="3" height="4.23" fill="#ffff00" />
<rect x="451" y="464.23" width="3" height="4.67" fill="#00ffff" />
<rect x="451" y="464.67" width="3" height="4.23" fill="#ffff00" />
<rect x="458" y="460.94" width="3" height="7.96" fill="#00ffff" />
<rect x="458" y="462.55" width="3" height="6.35" fill="#ffff00" />
<rect x="465" y="459.26" width="3" height="9.64" fill="#00ffff" />
<rect x="465" y="462.55" width="3" height="6.35" fill="#ffff00" />
<rect x="472" y="455.4" width="3" height="13.5" fill="#00ffff" />
<rect x="472" y="462.55" width="3" height="6.35" fill="#ffff00" />
<rect x="479" y="458.07" width="3" height="10.83" fill="#00ffff" />
<rect x="479" y="462.55" width="3" height="6.35" fill="#ffff00" />
<rect x="486" y="460.94" width="3" height="7.96" fill="#00ffff" />
<rect x="486" y="462.15" width="3" height="6.75" fill="#ffff00" />
<rect x="492" y="462.55" width="3" height="6.35" fill="#00ffff" />
<rect x="492" y="461.74" width="3" height="7.16" fill="#ffff00" />
<rect x="499" y="454.28" width="3" height="14.62" fill="#00ffff" />
<rect x="499" y="459.26" width="3" height="9.64" fill="#ffff00" />
<rect x="506" y="440.41" width="3" height="28.49" fill="#00ffff" />
<rect x="506" y="459.26" width="3" height="9.64" fill="#ffff00" />
<rect x="513" y="449.3" width="3" height="19.6" fill="#00ffff" />
<rect x="513" y="459.26" width="3" height="9.64" fill="#ffff00" />
<rect x="520" y="458.45" width="3" height="10.45" fill="#00ffff" />
<rect x="520" y="459.26" width="3" height="9.64" fill="#ffff00" />
<rect x="526" y="460.94" width="3" height="7.96" fill="#00ffff" />
<rect x="526" y="459.26" width="3" height="9.64" fill="#ffff00" />
<rect x="533" y="465.1" width="3" height="3.8" fill="#00ffff" />
<rect x="533" y="459.26" width="3" height="9.64" fill="#ffff00" />
<rect x="540" y="465.91" width="3" height="2.99" fill="#00ffff" />
<rect x="540" y="460.31" width="3" height="8.59" fill="#ffff00" />
<rect x="547" y="461.74" width="3" height="7.16" fill="#00ffff" />
<rect x="547" y="460.31" width="3" height="8.59" fill="#ffff00" />
<rect x="554" y="454.28" width="3" height="14.62" fill="#00ffff" />
<rect x="554" y="460.31" width="3" height="8.59" fill="#ffff00" />
<rect x="560" y="452.6" width="3" height="16.3" fill="#00ffff" />
<rect x="560" y="460.31" width="3" height="8.59" fill="#ffff00" />
<rect x="567" y="455.96" width="3" height="12.94" fill="#00ffff" />
<rect x="567" y="460.31" width="3" height="8.59" fill="#ffff00" />
<rect x="574" y="460.07" width="3" height="8.83" fill="#00ffff" />
<rect x="574" y="460.31" width="3" height="8.59" fill="#ffff00" />
<rect x="581" y="458.45" width="3" height="10.45" fill="#00ffff" />
<rect x="581" y="460.31" width="3" height="8.59" fill="#ffff00" />
<rect x="588" y="462.55" width="3" height="6.35" fill="#00ffff" />
<rect x="588" y="460.31" width="3" height="8.59" fill="#ffff00" />
<rect x="595" y="463.05" width="3" height="5.85" fill="#00ffff" />
<rect x="595" y="460.31" width="3" height="8.59" fill="#ffff00" />
<rect x="601" y="460.94" width="3" height="7.96" fill="#00ffff" />
<rect x="601" y="460.31" width="3" height="8.59" fill="#ffff00" />
<rect x="608" y="460.94" width="3" height="7.96" fill="#00ffff" />
<rect x="608" y="460.31" width="3" height="8.59" fill="#ffff00" />
<rect x="615" y="462.55" width="3" height="6.35" fill="#00ffff" />
<rect x="615" y="460.31" width="3" height="8.59" fill="#ffff00" />
<rect x="622" y="459.75" width="3" height="9.15" fill="#00ffff" />
<rect x="622" y="460.31" width="3" height="8.59" fill="#ffff00" />
<rect x="629" y="462.55" width="3" height="6.35" fill="#00ffff" />
<rect x="629" y="460.31" width="3" height="8.59" fill="#ffff00" />
<rect x="635" y="460.07" width="3" height="8.83" fill="#00ffff" />
<rect x="635" y="460.31" width="3" height="8.59" fill="#ffff00" />
<rect x="642" y="462.55" width="3" height="6.35" fill="#00ffff" />
<rect x="642" y="461.03" width="3" height="7.87" fill="#ffff00" />
<rect x="649" y="460.94" width="3" height="7.96" fill="#00ffff" />
<rect x="649" y="461.74" width="3" height="7.16" fill="#ffff00" />
<rect x="656" y="464.23" width="3" height="4.67" fill="#00ffff" />
<rect x="656" y="462.15" width="3" height="6.75" fill="#ffff00" />
<rect x="663" y="465.91" width="3" height="2.99" fill="#00ffff" />
<rect x="663" y="462.55" width="3" height="6.35" fill="#ffff00" />
<rect x="669" y="465.91" width="3" height="2.99" fill="#00ffff" />
<rect x="669" y="462.55" width="3" height="6.35" fill="#ffff00" />
<rect x="676" y="468.4" width="3" height="0.81" fill="#0000ff" />
<rect x="676" y="462.55" width="3" height="6.35" fill="#ffff00" />
<rect x="683" y="468.4" width="3" height="2.49" fill="#0000ff" />
<rect x="683" y="462.55" width="3" height="6.35" fill="#ffff00" />
<rect x="690" y="468.4" width="3" height="1.99" fill="#0000ff" />
<rect x="690" y="462.99" width="3" height="5.91" fill="#ffff00" />
<rect x="697" y="463.42" width="3" height="5.48" fill="#ffff00" />
<rect x="704" y="468.4" width="3" height="8.33" fill="#0000ff" />
<rect x="704" y="465.1" width="3" height="3.8" fill="#ffff00" />
<rect x="710" y="468.4" width="3" height="16.61" fill="#0000ff" />
<rect x="710" y="466.22" width="3" height="2.68" fill="#ffff00" />
<rect x="717" y="468.4" width="3" height="8.33" fill="#0000ff" />
<rect x="717" y="466.24" width="3" height="2.66" fill="#ffff00" />
<rect x="724" y="468.4" width="3" height="0.81" fill="#0000ff" />
<rect x="724" y="466.26" width="3" height="2.64" fill="#ffff00" />
<rect x="731" y="466.29" width="3" height="2.61" fill="#ffff00" />
<rect x="738" y="465.91" width="3" height="2.99" fill="#00ffff" />
<rect x="738" y="466.31" width="3" height="2.59" fill="#ffff00" />
<rect x="744" y="466.33" width="3" height="2.57" fill="#ffff00" />
<rect x="751" y="468.4" width="3" height="2.49" fill="#0000ff" />
<rect x="751" y="466.35" width="3" height="2.55" fill="#ffff00" />
<rect x="758" y="468.4" width="3" height="9.14" fill="#0000ff" />
<rect x="758" y="466.37" width="3" height="2.53" fill="#ffff00" />
<rect x="765" y="468.4" width="3" height="10.33" fill="#0000ff" />
<rect x="765" y="466.39" width="3" height="2.51" fill="#ffff00" />
<rect x="772" y="468.4" width="3" height="7.46" fill="#0000ff" />
<rect x="772" y="466.41" width="3" height="2.49" fill="#ffff00" />
<rect x="778" y="468.4" width="3" height="8.33" fill="#0000ff" />
<rect x="778" y="466.43" width="3" height="2.47" fill="#ffff00" />
<rect x="785" y="468.4" width="3" height="8.33" fill="#0000ff" />
<rect x="785" y="466.45" width="3" height="2.45" fill="#ffff00" />
<rect x="792" y="468.4" width="3" height="8.33" fill="#0000ff" />
<rect x="792" y="466.47" width="3" height="2.43" fill="#ffff00" />
<rect x="799" y="468.4" width="3" height="8.33" fill="#0000ff" />
<rect x="799" y="466.49" width="3" height="2.41" fill="#ffff00" />
<rect x="806" y="468.4" width="3" height="7.46" fill="#0000ff" />
<rect x="806" y="466.51" width="3" height="2.39" fill="#ffff00" />
<rect x="813" y="468.4" width="3" height="4.98" fill="#0000ff" />
<rect x="813" y="466.53" width="3" height="2.37" fill="#ffff00" />
<rect x="819" y="468.4" width="3" height="2.49" fill="#0000ff" />
<rect x="819" y="465.76" width="3" height="3.14" fill="#ffff00" />
<rect x="826" y="468.4" width="3" height="1.68" fill="#0000ff" />
<rect x="826" y="464.98" width="3" height="3.92" fill="#ffff00" />
<rect x="833" y="467.59" width="3" height="1.31" fill="#00ffff" />
<rect x="833" y="464.98" width="3" height="3.92" fill="#ffff00" />
<rect x="840" y="466.72" width="3" height="2.18" fill="#00ffff" />
<rect x="840" y="464.98" width="3" height="3.92" fill="#ffff00" />
<rect x="847" y="466.72" width="3" height="2.18" fill="#00ffff" />
<rect x="847" y="464.98" width="3" height="3.92" fill="#ffff00" />
<rect x="853" y="466.72" width="3" height="2.18" fill="#00ffff" />
<rect x="853" y="464.98" width="3" height="3.92" fill="#ffff00" />
<rect x="860" y="465.91" width="3" height="2.99" fill="#00ffff" />
<rect x="860" y="464.98" width="3" height="3.92" fill="#ffff00" />
<rect x="867" y="465.1" width="3" height="3.8" fill="#00ffff" />
<rect x="867" y="464.98" width="3" height="3.92" fill="#ffff00" />
<rect x="874" y="461.74" width="3" height="7.16" fill="#00ffff" />
<rect x="874" y="464.98" width="3" height="3.92" fill="#ffff00" />
<rect x="881" y="456.77" width="3" height="12.13" fill="#00ffff" />
<rect x="881" y="464.98" width="3" height="3.92" fill="#ffff00" />
<rect x="887" y="455.4" width="3" height="13.5" fill="#00ffff" />
<rect x="887" y="464.98" width="3" height="3.92" fill="#ffff00" />
<rect x="894" y="459.75" width="3" height="9.15" fill="#00ffff" />
<rect x="894" y="464.98" width="3" height="3.92" fill="#ffff00" />
<rect x="901" y="462.55" width="3" height="6.35" fill="#00ffff" />
<rect x="901" y="464.98" width="3" height="3.92" fill="#ffff00" />
<rect x="908" y="459.75" width="3" height="9.15" fill="#00ffff" />
<rect x="908" y="464.98" width="3" height="3.92" fill="#ffff00" />
<rect x="915" y="460.44" width="3" height="8.46" fill="#00ffff" />
<rect x="915" y="464.98" width="3" height="3.92" fill="#ffff00" />
<rect x="922" y="463.42" width="3" height="5.48" fill="#00ffff" />
<rect x="922" y="464.98" width="3" height="3.92" fill="#ffff00" />
<rect x="928" y="464.23" width="3" height="4.67" fill="#00ffff" />
<rect x="928" y="464.98" width="3" height="3.92" fill="#ffff00" />
<rect x="935" y="456.4" width="3" height="12.5" fill="#00ffff" />
<rect x="935" y="464.98" width="3" height="3.92" fill="#ffff00" />
<rect x="942" y="458.07" width="3" height="10.83" fill="#00ffff" />
<rect x="942" y="464.98" width="3" height="3.92" fill="#ffff00" />
<rect x="949" y="462.55" width="3" height="6.35" fill="#00ffff" />
<rect x="949" y="464.98" width="3" height="3.92" fill="#ffff00" />
<rect x="956" y="465.1" width="3" height="3.8" fill="#00ffff" />
<rect x="956" y="464.98" width="3" height="3.92" fill="#ffff00" />
<rect x="962" y="465.1" width="3" height="3.8" fill="#00ffff" />
<rect x="962" y="464.98" width="3" height="3.92" fill="#ffff00" />
<rect x="969" y="465.91" width="3" height="2.99" fill="#00ffff" />
<rect x="969" y="464.98" width="3" height="3.92" fill="#ffff00" />
<rect x="976" y="463.73" width="3" height="5.17" fill="#00ffff" />
<rect x="976" y="464.98" width="3" height="3.92" fill="#ffff00" />
<rect x="983" y="462.55" width="3" height="6.35" fill="#00ffff" />
<rect x="983" y="464.98" width="3" height="3.92" fill="#ffff00" />
<rect x="990" y="456.77" width="3" height="12.13" fill="#00ffff" />
<rect x="990" y="464.98" width="3" height="3.92" fill="#ffff00" />
<rect x="996" y="448.5" width="3" height="20.4" fill="#00ffff" />
<rect x="996" y="464.98" width="3" height="3.92" fill="#ffff00" />
<rect x="1003" y="450.11" width="3" height="18.79" fill="#00ffff" />
<rect x="1003" y="464.98" width="3" height="3.92" fill="#ffff00" />
<rect x="1010" y="448.5" width="3" height="20.4" fill="#00ffff" />
<rect x="1010" y="464.98" width="3" height="3.92" fill="#ffff00" />
<rect x="1017" y="452.6" width="3" height="16.3" fill="#00ffff" />
<rect x="1017" y="464.98" width="3" height="3.92" fill="#ffff00" />
<rect x="1024" y="454.28" width="3" height="14.62" fill="#00ffff" />
<rect x="1024" y="464.98" width="3" height="3.92" fill="#ffff00" />
<rect x="1031" y="457.58" width="3" height="11.32" fill="#00ffff" />
<rect x="1031" y="464.98" width="3" height="3.92" fill="#ffff00" />
<rect x="1037" y="457.58" width="3" height="11.32" fill="#00ffff" />
<rect x="1037" y="464.98" width="3" height="3.92" fill="#ffff00" />
<rect x="1044" y="462.55" width="3" height="6.35" fill="#00ffff" />
<rect x="1044" y="464.98" width="3" height="3.92" fill="#ffff00" />
<rect x="1051" y="461.43" width="3" height="7.47" fill="#00ffff" />
<rect x="1051" y="464.98" width="3" height="3.92" fill="#ffff00" />
<rect x="1058" y="458.45" width="3" height="10.45" fill="#00ffff" />
<rect x="1058" y="464.98" width="3" height="3.92" fill="#ffff00" />
<rect x="1065" y="463.42" width="3" height="5.48" fill="#00ffff" />
<rect x="1065" y="464.98" width="3" height="3.92" fill="#ffff00" />
<rect x="1071" y="463.42" width="3" height="5.48" fill="#00ffff" />
<rect x="1071" y="464.98" width="3" height="3.92" fill="#ffff00" />
<rect x="1078" y="462.18" width="3" height="6.72" fill="#00ffff" />
<rect x="1078" y="464.11" width="3" height="4.79" fill="#ffff00" />
<rect x="1085" y="457.27" width="3" height="11.63" fill="#00ffff" />
<rect x="1085" y="464.11" width="3" height="4.79" fill="#ffff00" />
<rect x="1092" y="458.57" width="3" height="10.33" fill="#00ffff" />
<rect x="1092" y="464.11" width="3" height="4.79" fill="#ffff00" />
<rect x="1099" y="454.28" width="3" height="14.62" fill="#00ffff" />
<rect x="1099" y="464.11" width="3" height="4.79" fill="#ffff00" />
<rect x="1106" y="451.11" width="3" height="17.79" fill="#00ffff" />
<rect x="1106" y="464.11" width="3" height="4.79" fill="#ffff00" />
<rect x="1112" y="451.11" width="3" height="17.79" fill="#00ffff" />
<rect x="1112" y="464.11" width="3" height="4.79" fill="#ffff00" />
<rect x="1119" y="457.64" width="3" height="11.26" fill="#00ffff" />
<rect x="1119" y="464.11" width="3" height="4.79" fill="#ffff00" />
<rect x="1126" y="452.04" width="3" height="16.86" fill="#00ffff" />
<rect x="1126" y="464.11" width="3" height="4.79" fill="#ffff00" />
<rect x="1133" y="458.57" width="3" height="10.33" fill="#00ffff" />
<rect x="1133" y="464.11" width="3" height="4.79" fill="#ffff00" />
<rect x="1140" y="461.37" width="3" height="7.53" fill="#00ffff" />
<rect x="1140" y="464.11" width="3" height="4.79" fill="#ffff00" />
<rect x="1146" y="455.4" width="3" height="13.5" fill="#00ffff" />
<rect x="1146" y="464.11" width="3" height="4.79" fill="#ffff00" />
<rect x="1153" y="448.37" width="3" height="20.53" fill="#00ffff" />
<rect x="1153" y="464.11" width="3" height="4.79" fill="#ffff00" />
<rect x="1160" y="442.28" width="3" height="26.62" fill="#00ffff" />
<rect x="1160" y="464.11" width="3" height="4.79" fill="#ffff00" />
<rect x="1167" y="435.43" width="3" height="33.47" fill="#00ffff" />
<rect x="1167" y="461.37" width="3" height="7.53" fill="#ffff00" />
<rect x="1174" y="436.86" width="3" height="32.04" fill="#00ffff" />
<rect x="1174" y="461.37" width="3" height="7.53" fill="#ffff00" />
<rect x="1180" y="441.03" width="3" height="27.87" fill="#00ffff" />
<rect x="1180" y="461.37" width="3" height="7.53" fill="#ffff00" />
<rect x="1187" y="430.15" width="3" height="38.75" fill="#00ffff" />
<rect x="1187" y="458.45" width="3" height="10.45" fill="#ffff00" />
<rect x="1194" y="426.97" width="3" height="41.93" fill="#00ffff" />
<rect x="1194" y="457.98" width="3" height="10.92" fill="#ffff00" />
<rect x="1201" y="422" width="3" height="46.9" fill="#00ffff" />
<rect x="1201" y="457.51" width="3" height="11.38" fill="#ffff00" />
<rect x="1208" y="428.84" width="3" height="40.06" fill="#00ffff" />
<rect x="1208" y="457.05" width="3" height="11.85" fill="#ffff00" />
<rect x="1215" y="446.13" width="3" height="22.77" fill="#00ffff" />
<rect x="1215" y="456.58" width="3" height="12.32" fill="#ffff00" />
<rect x="1221" y="461.56" width="3" height="7.34" fill="#00ffff" />
<rect x="1221" y="458.45" width="3" height="10.45" fill="#ffff00" />
<rect x="1228" y="468.4" width="3" height="18.04" fill="#0000ff" />
<rect x="1228" y="459.51" width="3" height="9.39" fill="#ffff00" />
<rect x="1235" y="468.4" width="3" height="37.13" fill="#0000ff" />
<rect x="1235" y="463.55" width="3" height="5.35" fill="#ffff00" />
<rect x="1242" y="468.4" width="3" height="21.77" fill="#0000ff" />
<rect x="1242" y="465.97" width="3" height="2.93" fill="#ffff00" />
<rect x="1249" y="468.4" width="3" height="6.84" fill="#0000ff" />
<rect x="1249" y="467.59" width="3" height="1.31" fill="#ffff00" />
<rect x="1255" y="468.4" width="3" height="18.04" fill="#0000ff" />
<rect x="1262" y="468.4" width="3" height="27.31" fill="#0000ff" />
<rect x="1269" y="468.4" width="3" height="30.1" fill="#0000ff" />
<rect x="1276" y="468.4" width="3" height="16.17" fill="#0000ff" />
<rect x="1283" y="468.4" width="3" height="29.17" fill="#0000ff" />
<rect x="1289" y="468.4" width="3" height="28.24" fill="#0000ff" />
<rect x="1296" y="468.4" width="3" height="34.71" fill="#0000ff" />
<rect x="1303" y="468.4" width="3" height="31.04" fill="#0000ff" />
<rect x="1310" y="465.04" width="3" height="3.86" fill="#00ffff" />
<rect x="1310" y="468.4" width="3" height="2.24" fill="#0000ff" />
<rect x="1317" y="468.4" width="3" height="21.77" fill="#0000ff" />
<rect x="1324" y="461.37" width="3" height="7.53" fill="#00ffff" />
<rect x="1324" y="465.97" width="3" height="2.93" fill="#ffff00" />
<rect x="1330" y="468.4" width="3" height="20.77" fill="#0000ff" />
<rect x="1330" y="465.97" width="3" height="2.93" fill="#ffff00" />
<rect x="1337" y="468.4" width="3" height="29.17" fill="#0000ff" />
<rect x="1337" y="465.97" width="3" height="2.93" fill="#ffff00" />
<rect x="1344" y="468.4" width="3" height="126.89" fill="#0000ff" />
<rect x="1351" y="468.4" width="3" height="202.15" fill="#0000ff" />
<rect x="1358" y="468.4" width="3" height="171.67" fill="#0000ff" />
<rect x="1364" y="468.4" width="3" height="66.55" fill="#0000ff" />
<rect x="1371" y="448" width="3" height="20.9" fill="#00ffff" />
<rect x="1371" y="468.4" width="3" height="29.23" fill="#0000ff" />
</g>
<polyline points="-3.5,481.4 3.3,481.4 10.11,486.69 16.93,486.69 23.74,485.01 30.55,489.55 37.36,485.01 44.18,488.3 50.99,489.55 57.8,485.82 64.62,484.2 71.43,480.03 78.24,482.52 85.06,479.22 91.87,481.71 98.68,474.62 105.49,471.39 112.31,470.89 119.12,470.08 125.93,470.08 132.75,466.72 139.56,462.55 146.37,458.45 153.19,453.1 160,446.01 166.81,437.61 173.62,446.01 180.44,452.85 187.25,451.79 194.06,454.72 200.88,453.47 207.69,448.5 214.5,449.3 221.32,443.52 228.13,449.3 234.94,442.65 241.75,439.29 248.57,441.47 255.38,445.14 262.19,450.11 269.01,451.42 275.82,452.1 282.63,448.12 289.45,446.75 296.26,450.11 303.07,457.58 309.88,459.26 316.7,450.42 323.51,450.98 330.32,446.44 337.14,445.14 343.95,449.3 350.76,458.07 357.58,459.26 364.39,466.72 371.2,471.7 378.01,465.1 384.83,458.76 391.64,464.23 398.45,460.44 405.27,465.1 412.08,464.23 418.89,465.91 425.71,465.1 432.52,462.55 439.33,465.91 446.14,471.7 452.96,464.23 459.77,460.94 466.58,459.26 473.4,455.4 480.21,458.07 487.02,460.94 493.84,462.55 500.65,454.28 507.46,440.41 514.27,449.3 521.09,458.45 527.9,460.94 534.71,465.1 541.53,465.91 548.34,461.74 555.15,454.28 561.97,452.6 568.78,455.96 575.59,460.07 582.4,458.45 589.22,462.55 596.03,463.05 602.84,460.94 609.66,460.94 616.47,462.55 623.28,459.75 630.1,462.55 636.91,460.07 643.72,462.55 650.53,460.94 657.35,464.23 664.16,465.91 670.97,465.91 677.79,469.21 684.6,470.89 691.41,470.39 698.23,468.4 705.04,476.73 711.85,485.01 718.66,476.73 725.48,469.21 732.29,468.4 739.1,465.91 745.92,468.4 752.73,470.89 759.54,477.54 766.36,478.73 773.17,475.86 779.98,476.73 786.79,476.73 793.61,476.73 800.42,476.73 807.23,475.86 814.05,473.38 820.86,470.89 827.67,470.08 834.49,467.59 841.3,466.72 848.11,466.72 854.92,466.72 861.74,465.91 868.55,465.1 875.36,461.74 882.18,456.77 888.99,455.4 895.8,459.75 902.62,462.55 909.43,459.75 916.24,460.44 923.05,463.42 929.87,464.23 936.68,456.4 943.49,458.07 950.31,462.55 957.12,465.1 963.93,465.1 970.75,465.91 977.56,463.73 984.37,462.55 991.18,456.77 998,448.5 1004.81,450.11 1011.62,448.5 1018.44,452.6 1025.25,454.28 1032.06,457.58 1038.88,457.58 1045.69,462.55 1052.5,461.43 1059.31,458.45 1066.13,463.42 1072.94,463.42 1079.75,462.18 1086.57,457.27 1093.38,458.57 1100.19,454.28 1107.01,451.11 1113.82,451.11 1120.63,457.64 1127.44,452.04 1134.26,458.57 1141.07,461.37 1147.88,455.4 1154.7,448.37 1161.51,442.28 1168.32,435.43 1175.14,436.86 1181.95,441.03 1188.76,430.15 1195.57,426.97 1202.39,422 1209.2,428.84 1216.01,446.13 1222.83,461.56 1229.64,486.44 1236.45,505.53 1243.27,490.17 1250.08,475.24 1256.89,486.44 1263.7,495.71 1270.52,498.5 1277.33,484.57 1284.14,497.57 1290.96,496.64 1297.77,503.11 1304.58,499.44 1311.4,465.04 1318.21,490.17 1325.02,461.37 1331.83,489.17 1338.65,497.57 1345.46,595.29 1352.27,670.55 1359.09,640.07 1365.9,534.95 1372.71,448" fill="none" stroke="#ff00ff" stroke-width="1" shape-rendering="crispEdges"/>
<polyline points="-3.5,455.4 3.3,455.4 10.11,456.4 16.93,470.27 23.74,485.19 30.55,495.77 37.36,485.82 44.18,494.52 50.99,486.44 57.8,476.49 64.62,470.27 71.43,458.45 78.24,458.45 85.06,459.26 91.87,450.98 98.68,441.03 105.49,434.81 112.31,439.79 119.12,454.28 125.93,457.58 132.75,457.58 139.56,458.07 146.37,453.47 153.19,453.78 160,428.59 166.81,401.53 173.62,414.91 180.44,429.34 187.25,422.68 194.06,455.09 200.88,455.96 207.69,462.55 214.5,491.66 221.32,465.1 228.13,472.88 234.94,470.08 241.75,445.14 248.57,465.1 255.38,477.23 262.19,477.85 269.01,496.39 275.82,468.4 282.63,475.06 289.45,478.73 296.26,477.05 303.07,475.86 309.88,461.74 316.7,438.11 323.51,450.98 330.32,452.6 337.14,453.78 343.95,453.78 350.76,455.96 357.58,458.07 364.39,477.54 371.2,463.42 378.01,465.91 384.83,465.91 391.64,465.1 398.45,464.23 405.27,471.7 412.08,461.74 418.89,473.38 425.71,474.62 432.52,486.69 439.33,471.7 446.14,475.86 452.96,462.55 459.77,459.26 466.58,458.07 473.4,457.08 480.21,456.77 487.02,461.74 493.84,457.58 500.65,444.27 507.46,417.64 514.27,431.08 521.09,448.5 527.9,455.96 534.71,465.1 541.53,455.96 548.34,473.38 555.15,493.65 561.97,468.4 568.78,461.74 575.59,458.45 582.4,448.12 589.22,461.74 596.03,475.06 602.84,478.35 609.66,495.77 616.47,485.01 623.28,474.62 630.1,487.06 636.91,476.73 643.72,467.59 650.53,475.86 657.35,474.62 664.16,465.91 670.97,473.38 677.79,475.86 684.6,487.5 691.41,486.38 698.23,478.73 705.04,477.54 711.85,472.57 718.66,461.74 725.48,449.3 732.29,445.63 739.1,455.4 745.92,454.28 752.73,455.96 759.54,469.21 766.36,475.06 773.17,483.33 779.98,486.69 786.79,477.54 793.61,487.5 800.42,487.5 807.23,477.85 814.05,477.54 820.86,468.4 827.67,458.45 834.49,459.26 841.3,448.5 848.11,440.41 854.92,447.63 861.74,449.74 868.55,448.5 875.36,446.44 882.18,444.27 888.99,455.09 895.8,465.1 902.62,466.72 909.43,465.91 916.24,466.72 923.05,471.7 929.87,472.57 936.68,448.74 943.49,453.47 950.31,456.77 957.12,468.4 963.93,480.4 970.75,481.71 977.56,480.03 984.37,502.49 991.18,470.08 998,444.76 1004.81,446.44 1011.62,432.63 1018.44,434.31 1025.25,445.14 1032.06,445.14 1038.88,466.72 1045.69,487.5 1052.5,472.57 1059.31,478.35 1066.13,483.33 1072.94,470.08 1079.75,456.77 1086.57,442.4 1093.38,446.13 1100.19,445.57 1107.01,443.71 1113.82,427.53 1120.63,448.37 1127.44,444.64 1134.26,475.24 1141.07,457.27 1147.88,455.4 1154.7,448.37 1161.51,441.84 1168.32,416.4 1175.14,436.3 1181.95,432.57 1188.76,413.04 1195.57,390.03 1202.39,370.37 1209.2,410.31 1216.01,468.77 1222.83,493.9 1229.64,576.01 1236.45,659.35 1243.27,645.05 1250.08,634.47 1256.89,628.88 1263.7,614.57 1270.52,600.89 1277.33,464.05 1284.14,436.86 1290.96,459.51 1297.77,531.84 1304.58,459.07 1311.4,355.82 1318.21,403.71 1325.02,386.3 1331.83,421.75 1338.65,468.4 1345.46,706 1352.27,944.23 1359.09,944.23 1365.9,569.79 1371.8,392" fill="none" stroke="#ffffff" stroke-width="1" stroke-linejoin="miter" shape-rendering="crispEdges"/>
<polyline points="-3.5,470.89 3.3,470.89 10.11,471.31 16.93,471.73 23.74,472.15 30.55,472.57 37.36,472.57 44.18,472.57 50.99,472.57 57.8,472.57 64.62,472.44 71.43,472.32 78.24,472.19 85.06,472.07 91.87,471.68 98.68,471.28 105.49,470.89 112.31,470.64 119.12,470.39 125.93,469.4 132.75,468.4 139.56,467.56 146.37,466.72 153.19,465.69 160,464.67 166.81,463.61 173.62,462.55 180.44,461.9 187.25,461.25 194.06,461.25 200.88,461.25 207.69,461.25 214.5,460.98 221.32,460.71 228.13,460.44 234.94,460.04 241.75,459.65 248.57,459.26 255.38,460.1 262.19,460.94 269.01,463.27 275.82,465.6 282.63,469.21 289.45,470.39 296.26,470.23 303.07,470.08 309.88,469.24 316.7,468.4 323.51,467.16 330.32,466.53 337.14,465.91 343.95,465.64 350.76,465.37 357.58,465.1 364.39,464.96 371.2,464.81 378.01,464.67 384.83,464.45 391.64,464.23 398.45,464.19 405.27,464.14 412.08,464.1 418.89,464.05 425.71,464.01 432.52,463.97 439.33,463.92 446.14,463.67 452.96,463.42 459.77,462.86 466.58,462.3 473.4,461.74 480.21,460.5 487.02,459.26 493.84,458.07 500.65,457.42 507.46,456.77 514.27,455.93 521.09,455.09 527.9,455.09 534.71,455.09 541.53,457.83 548.34,457.7 555.15,457.58 561.97,456.49 568.78,455.4 575.59,454.59 582.4,453.78 589.22,453.95 596.03,454.11 602.84,454.28 609.66,454.84 616.47,455.4 623.28,455.96 630.1,456.5 636.91,457.04 643.72,457.58 650.53,457.97 657.35,458.37 664.16,458.76 670.97,458.92 677.79,459.09 684.6,459.26 691.41,460.1 698.23,460.94 705.04,462.34 711.85,463.73 718.66,464.23 725.48,464.73 732.29,464.48 739.1,464.23 745.92,463.98 752.73,463.73 759.54,464.23 766.36,464.73 773.17,465.12 779.98,465.52 786.79,465.91 793.61,466.15 800.42,466.38 807.23,466.61 814.05,466.84 820.86,465.97 827.67,465.1 834.49,464.51 841.3,463.92 848.11,463.85 854.92,463.78 861.74,463.71 868.55,463.64 875.36,463.57 882.18,463.5 888.99,463.42 895.8,463.42 902.62,463.42 909.43,463.42 916.24,463.42 923.05,463.42 929.87,463.42 936.68,463.42 943.49,463.42 950.31,463.42 957.12,463.42 963.93,463.49 970.75,463.55 977.56,463.61 984.37,463.67 991.18,463.73 998,463.34 1004.81,462.95 1011.62,462.55 1018.44,462.46 1025.25,462.37 1032.06,462.27 1038.88,462.18 1045.69,463.64 1052.5,465.1 1059.31,465.64 1066.13,466.18 1072.94,466.72 1079.75,465.29 1086.57,464.05 1093.38,462.8 1100.19,462.69 1107.01,462.58 1113.82,462.47 1120.63,462.35 1127.44,462.24 1134.26,462.14 1141.07,462.03 1147.88,461.93 1154.7,460.9 1161.51,459.88 1168.32,458.57 1175.14,457.27 1181.95,456.05 1188.76,454.84 1195.57,453.44 1202.39,452.04 1209.2,451.29 1216.01,450.55 1222.83,451.67 1229.64,456.15 1236.45,461.37 1243.27,465.41 1250.08,468.4 1256.89,470.64 1263.7,471.95 1270.52,471.95 1277.33,471.95 1284.14,473.38 1290.96,473.59 1297.77,473.81 1304.58,472.88 1311.4,470.64 1318.21,469.64 1325.02,465.97 1331.83,463.73 1338.65,464.67 1345.46,474.37 1352.27,488.3 1359.09,499.44 1365.9,501.37 1372.71,497.63" fill="none" stroke="#ff0000" stroke-width="2.1" stroke-linejoin="round"/>
</g>
<g shape-rendering="crispEdges">
<rect x="1427" y="72" width="235" height="1" fill="#d0d0d0" />
<rect x="1427" y="81" width="77" height="30" fill="#f8f8f8" />
<rect x="1427" y="111" width="77" height="6" fill="#ffff00" />
<rect x="1427" y="117" width="234" height="28" fill="#ffff00" />
<rect x="1427" y="145" width="77" height="4" fill="#ffff00" />
<rect x="1427" y="149" width="127" height="1" fill="#ffff00" />
<rect x="1427" y="150" width="110" height="29" fill="#ffff00" />
<rect x="1427" y="179" width="123" height="5" fill="#ffff00" />
<rect x="1427" y="184" width="72" height="9" fill="#ffff00" />
<rect x="1427" y="193" width="32" height="7" fill="#ffff00" />
<rect x="1427" y="200" width="12" height="2" fill="#ffff00" />
<rect x="1427" y="202" width="2" height="3" fill="#ffff00" />
<rect x="1427" y="205" width="5" height="3" fill="#ffff00" />
<rect x="1427" y="208" width="34" height="15" fill="#ffff00" />
<rect x="1427" y="223" width="51" height="4" fill="#ffff00" />
<rect x="1427" y="227" width="67" height="5" fill="#ffff00" />
<rect x="1427" y="232" width="51" height="3" fill="#ffff00" />
<rect x="1427" y="235" width="72" height="2" fill="#ffff00" />
<rect x="1427" y="237" width="55" height="1" fill="#ffff00" />
<rect x="1427" y="238" width="66" height="6" fill="#ffff00" />
<rect x="1427" y="244" width="39" height="1" fill="#ffff00" />
<rect x="1427" y="245" width="51" height="1" fill="#ffff00" />
<rect x="1427" y="246" width="34" height="2" fill="#ffff00" />
<rect x="1427" y="145" width="77" height="1" fill="#55ffff" />
</g>
<polygon points="1427,248 1461,248 1480,248.6 1506,249 1516,250 1512,251 1499.5,252.2 1470.6,253.2 1470,254.3 1461,254.5 1461,255.7 1456,256 1456,258 1455,258.3 1446.7,260 1436,260.3 1437,262.5 1436.5,264 1438,266 1437.5,268.5 1436,271 1436.5,273.5 1436,276.7 1439.5,278.2 1446.7,280.3 1454,282.5 1459.7,284.7 1461,285.4 1457.6,286.8 1448.2,288.3 1438.8,289 1441.7,291.2 1448.9,293.3 1459,295.5 1470.6,297 1489,298 1483.6,299.2 1477.8,300.5 1469.1,302 1454.7,303.5 1436,304.2 1434.5,305.5 1434.5,308.5 1438.8,308.8 1438.8,311.4 1432,311.6 1432,314 1429,314.5 1428.3,317 1427,317" fill="#ffff00" shape-rendering="crispEdges"/>
<g font-family='"Liberation Sans","Noto Sans CJK SC",sans-serif' font-size="12">
<text x="1430" y="19" fill="#c0c0c0" font-size="12" text-anchor="start" >002797 第一创业</text>
</g>
<g shape-rendering="crispEdges">
<rect x="1574.5" y="7.5" width="16" height="16" fill="#000" stroke="#ff6060" stroke-width="1"/>
<rect x="1577" y="8" width="1" height="14" fill="#0000c0" />
<rect x="1578" y="9" width="5" height="1" fill="#008000" />
<rect x="1578" y="11" width="8" height="1" fill="#008000" />
<rect x="1578" y="13" width="11" height="1" fill="#008000" />
<rect x="1578" y="15" width="7" height="1" fill="#ff0000" />
<rect x="1578" y="17" width="4" height="1" fill="#ff0000" />
<rect x="1578" y="19" width="4" height="1" fill="#ff0000" />
<rect x="1578" y="21" width="2" height="1" fill="#ff0000" />
<rect x="1593" y="8" width="1" height="14" fill="#0000c0" />
<rect x="1611" y="7" width="1" height="15" fill="#0000ff" />
</g>
<path d="M1594 8 L1605 13 L1605 14 Q1598.5 16 1595.5 22 L1594 22 Z" fill="#ff0000"/><path d="M1594 10 L1599 13.5 L1594 18.7 Z" fill="#ffff00"/>
<path d="M1612 7 L1622.8 12 L1622.8 13 Q1616 15.5 1613.5 21.5 L1612 21.5 Z" fill="#00e000"/><path d="M1612 9 L1616.6 12.5 L1612 19 Z" fill="#0000ff"/>
<g shape-rendering="crispEdges">
<rect x="1628" y="7" width="15" height="15" fill="#000080" />
<rect x="1629" y="8" width="13" height="13" fill="#d4d0c8" />
<rect x="1638" y="10" width="4" height="5" fill="#ffff00" />
<rect x="1630" y="10" width="5" height="3" fill="#00ffff" />
<rect x="1630" y="13" width="5" height="2" fill="#008080" />
<rect x="1633" y="9" width="5" height="1" fill="#000080" />
<rect x="1636" y="10" width="1" height="4" fill="#000080" />
<rect x="1637" y="14" width="3" height="1" fill="#000080" />
<rect x="1631" y="17" width="2" height="1" fill="#000080" />
<rect x="1634" y="17" width="6" height="1" fill="#000080" />
<rect x="1631" y="19" width="2" height="1" fill="#000080" />
<rect x="1634" y="19" width="6" height="1" fill="#000080" />
</g>
<g font-family='"Liberation Sans","Noto Sans CJK SC",sans-serif' font-size="12" fill="#c0c0c0">
<text x="1431" y="896.5" fill="#c0c0c0" font-size="12" text-anchor="start" >成本分布,日期:</text>
<text x="1515.5" y="896.5" fill="#c0c0c0" font-size="12" text-anchor="start" >2024/11/07</text>
<text x="1431" y="913.5" fill="#c0c0c0" font-size="12" text-anchor="start" >获利比例:</text>
<text x="1431" y="930.5" fill="#c0c0c0" font-size="12" text-anchor="start" >11.59处获利盘:</text>
<text x="1519" y="930.5" fill="#c0c0c0" font-size="12" text-anchor="start" >100.0%</text>
<text x="1431" y="947.5" fill="#c0c0c0" font-size="12" text-anchor="start" >平均成本:</text>
<text x="1488.5" y="947.5" fill="#c0c0c0" font-size="12" text-anchor="start" >9.52元</text>
<text x="1431" y="964.5" fill="#c0c0c0" font-size="12" text-anchor="start" >90%成本5.80-10.98集中45.8%</text>
<text x="1575" y="913.5" fill="#c0c0c0" font-size="12" text-anchor="middle" >88.3%</text>
</g>
<rect x="1488.5" y="901.5" width="148" height="16" fill="none" stroke="#ffff00" stroke-width="1" shape-rendering="crispEdges"/>
<path d="M1636.5 901.5 H1656.5 V917.5 H1636.5" fill="none" stroke="#ffffff" stroke-width="1" shape-rendering="crispEdges"/>
<g font-family='"Liberation Sans","Noto Sans CJK SC",sans-serif' font-size="12" fill="#c0c0c0">
<text x="0" y="19.5" fill="#c0c0c0" font-size="12" text-anchor="start" >0分钟</text>
<text x="40" y="19.5" fill="#00ffff" font-size="12" text-anchor="start" >日线</text>
<text x="74" y="19.5" fill="#c0c0c0" font-size="12" text-anchor="start" >周线</text>
<text x="107.5" y="19.5" fill="#c0c0c0" font-size="12" text-anchor="start" >月线</text>
<text x="140.5" y="19.5" fill="#c0c0c0" font-size="12" text-anchor="start" >多周期</text>
<text x="184.5" y="19.5" fill="#c0c0c0" font-size="12" text-anchor="start" >更多</text>
<path d="M213 10.5 L218 15 L213 19.5" fill="none" stroke="#c0c0c0" stroke-width="1"/>
<text x="1128.5" y="19.5" fill="#c0c0c0" font-size="12" text-anchor="middle" >复权</text>
<text x="1163" y="19.5" fill="#c0c0c0" font-size="12" text-anchor="middle" >叠加</text>
<text x="1198" y="19.5" fill="#c0c0c0" font-size="12" text-anchor="middle" >历史</text>
<text x="1233" y="19.5" fill="#c0c0c0" font-size="12" text-anchor="middle" >统计</text>
<text x="1268" y="19.5" fill="#c0c0c0" font-size="12" text-anchor="middle" >画线</text>
<text x="1303" y="19.5" fill="#c0c0c0" font-size="12" text-anchor="middle" >F10</text>
<text x="1338" y="19.5" fill="#c0c0c0" font-size="12" text-anchor="middle" >标记</text>
<text x="1373" y="19.5" fill="#c0c0c0" font-size="12" text-anchor="middle" >-自选</text>
<text x="1409" y="19.5" fill="#c0c0c0" font-size="12" text-anchor="middle" >返回</text>
</g>
<defs><clipPath id="r1"><rect x="0" y="26" width="700" height="14"/></clipPath><clipPath id="r3"><rect x="0" y="337" width="1376" height="9.5"/></clipPath></defs>
<g font-family='"Liberation Sans","Noto Sans CJK SC",sans-serif' font-size="12" clip-path="url(#r1)">
<text x="3" y="40" fill="#ff00ff" font-size="12" text-anchor="start" >8.15</text>
<text x="33" y="40" fill="#00ff00" font-size="12" text-anchor="start" >D2: 8.49</text>
<text x="93" y="40" fill="#c0c0c0" font-size="12" text-anchor="start" >DIF: 0.00</text>
<text x="158" y="40" fill="#0000ff" font-size="12" text-anchor="start" >DEA: 0.00</text>
</g>
<rect x="0" y="27" width="142" height="6.7" fill="#000" opacity="0.8"/>
<rect x="150" y="27" width="64" height="6.7" fill="#000" opacity="0.85"/>
<rect x="150" y="33.7" width="64" height="7" fill="#000" opacity="0.35"/>
<path d="M146.5 30 V40 M144.5 32.5 L146.5 29.5 L148.5 32.5 M215.5 30 V40 M213.5 32.5 L215.5 29.5 L217.5 32.5" stroke="#ff5050" stroke-width="1" fill="none" stroke-dasharray="3 1.5"/>
<g font-family='"Liberation Sans","Noto Sans CJK SC",sans-serif' font-size="12">
<text x="315.5" y="39.5" fill="#c0c0c0" font-size="12" text-anchor="start" >支撑压力点: 8.46</text>
<path d="M410.5 29.5 V41 M408.3 33 L410.5 29 L412.7 33 Z" stroke="#ff5050" stroke-width="1" fill="#ff5050"/>
<rect x="0" y="42" width="380" height="14" fill="#000" />
<text x="-1" y="53.5" fill="#c8c800" font-size="12" text-anchor="start" >量</text>
<text x="11.5" y="53.5" fill="#c8c800" font-size="12" text-anchor="start" >263055</text>
<text x="55" y="53.5" fill="#c0c0c0" font-size="12" text-anchor="start" >额1.80亿</text>
<text x="106.5" y="53.5" fill="#ff5050" font-size="12" text-anchor="start" >幅0.02(0.29%)</text>
<text x="188.5" y="53.5" fill="#c0c0c0" font-size="12" text-anchor="start" >换0.63%(量复权)</text>
<text x="282.5" y="53.5" fill="#c0c0c0" font-size="12" text-anchor="start" >流通42.0亿</text>
<text x="345.5" y="53.5" fill="#c8c800" font-size="12" text-anchor="start" >证券</text>
<text x="5.5" y="81.5" fill="#00f0f0" font-size="12" text-anchor="start" >深圳板块</text>
</g>
<g font-family='"Liberation Sans","Noto Sans CJK SC",sans-serif' font-size="12" opacity="0.8" transform="translate(0 340) scale(1 0.62) translate(0 -340)">
<text x="-22" y="350" fill="#ff00ff" font-size="12" text-anchor="start" >短线30筹码: 0.00</text>
<text x="97" y="350" fill="#ff0000" font-size="12" text-anchor="start" >中线80筹码: -4.64</text>
<text x="219" y="350" fill="#c0c0c0" font-size="12" text-anchor="start" >价位: 1.22</text>
<text x="291" y="350" fill="#ffff00" font-size="12" text-anchor="start" >集中度: 34.73</text>
<text x="378" y="350" fill="#00e0e0" font-size="12" text-anchor="start" >浮盈%: 7.66</text>
<text x="449" y="350" fill="#e0e0e0" font-size="12" text-anchor="start" >流动盘: 0.52</text>
<text x="532" y="350" fill="#ffff00" font-size="12" text-anchor="start" >乖离差: -17.14</text>
<text x="627" y="350" fill="#ffff00" font-size="12" text-anchor="start" >成本: 17891.00</text>
<text x="713" y="350" fill="#ff0000" font-size="12" text-anchor="start" >筹码块: 17886.77</text>
<text x="832" y="350" fill="#ffff00" font-size="12" text-anchor="start" >现价: 5.72</text>
</g>
<path d="M76.5 338 V346 M200.5 338 V346 M281.5 338.5 V342 M279.5 342.5 L281.5 338.5 L283.5 342.5 Z M369 338.5 V346 M367 342.5 L369 338.5 L371 342.5 Z M523 338 V346 M615 338 V346 M811 338 V346 M823 338 V346 M892.5 338 V346" stroke="#ff5050" stroke-width="1" fill="#ff5050" stroke-dasharray="3 1.5"/>
<g shape-rendering="crispEdges" fill="#c00000">
<rect x="138" y="957" width="1" height="12" fill="#c00000" />
<rect x="241" y="957" width="1" height="12" fill="#c00000" />
<rect x="385" y="957" width="1" height="12" fill="#c00000" />
<rect x="520" y="957" width="1" height="12" fill="#c00000" />
<rect x="656" y="957" width="1" height="12" fill="#c00000" />
<rect x="786" y="957" width="1" height="12" fill="#c00000" />
<rect x="942" y="957" width="1" height="12" fill="#c00000" />
<rect x="1092" y="957" width="1" height="12" fill="#c00000" />
<rect x="1221" y="957" width="1" height="12" fill="#c00000" />
<rect x="26" y="957" width="1" height="2" fill="#c00000" />
<rect x="64" y="957" width="1" height="2" fill="#c00000" />
<rect x="101" y="957" width="1" height="2" fill="#c00000" />
<rect x="164" y="957" width="1" height="2" fill="#c00000" />
<rect x="190" y="957" width="1" height="2" fill="#c00000" />
<rect x="215" y="957" width="1" height="2" fill="#c00000" />
<rect x="277" y="957" width="1" height="2" fill="#c00000" />
<rect x="313" y="957" width="1" height="2" fill="#c00000" />
<rect x="349" y="957" width="1" height="2" fill="#c00000" />
<rect x="418" y="957" width="1" height="2" fill="#c00000" />
<rect x="452" y="957" width="1" height="2" fill="#c00000" />
<rect x="486" y="957" width="1" height="2" fill="#c00000" />
<rect x="554" y="957" width="1" height="2" fill="#c00000" />
<rect x="588" y="957" width="1" height="2" fill="#c00000" />
<rect x="622" y="957" width="1" height="2" fill="#c00000" />
<rect x="688" y="957" width="1" height="2" fill="#c00000" />
<rect x="721" y="957" width="1" height="2" fill="#c00000" />
<rect x="753" y="957" width="1" height="2" fill="#c00000" />
<rect x="824" y="957" width="1" height="2" fill="#c00000" />
<rect x="864" y="957" width="1" height="2" fill="#c00000" />
<rect x="903" y="957" width="1" height="2" fill="#c00000" />
<rect x="980" y="957" width="1" height="2" fill="#c00000" />
<rect x="1017" y="957" width="1" height="2" fill="#c00000" />
<rect x="1055" y="957" width="1" height="2" fill="#c00000" />
<rect x="1124" y="957" width="1" height="2" fill="#c00000" />
<rect x="1157" y="957" width="1" height="2" fill="#c00000" />
<rect x="1189" y="957" width="1" height="2" fill="#c00000" />
<rect x="1255" y="957" width="1" height="2" fill="#c00000" />
<rect x="1289" y="957" width="1" height="2" fill="#c00000" />
<rect x="1323" y="957" width="1" height="2" fill="#c00000" />
</g>
<g font-family='"Liberation Sans","Noto Sans CJK SC",sans-serif' font-size="12" fill="#c00000">
<text x="139.6" y="968.5" fill="#c00000" font-size="12" text-anchor="start" >2</text>
<text x="242.6" y="968.5" fill="#c00000" font-size="12" text-anchor="start" >3</text>
<text x="386.6" y="968.5" fill="#c00000" font-size="12" text-anchor="start" >4</text>
<text x="521.6" y="968.5" fill="#c00000" font-size="12" text-anchor="start" >5</text>
<text x="657.6" y="968.5" fill="#c00000" font-size="12" text-anchor="start" >6</text>
<text x="787.6" y="968.5" fill="#c00000" font-size="12" text-anchor="start" >7</text>
<text x="943.6" y="968.5" fill="#c00000" font-size="12" text-anchor="start" >8</text>
<text x="1093.6" y="968.5" fill="#c00000" font-size="12" text-anchor="start" >9</text>
<text x="1222.6" y="968.5" fill="#c00000" font-size="12" text-anchor="start" >10</text>
</g>
<rect x="1295.5" y="957" width="77" height="12" fill="#0a246a" shape-rendering="crispEdges"/>
<text x="1297" y="968" fill="#e8e8e8" font-size="12" text-anchor="start" font-family='"Liberation Sans","Noto Sans CJK SC",sans-serif'>2024/11/07/四</text>
<text x="1402" y="968.5" fill="#e0e0e0" font-size="12" text-anchor="middle" font-family='"Liberation Sans","Noto Sans CJK SC",sans-serif'>日线</text>
</svg>
</body></html>
